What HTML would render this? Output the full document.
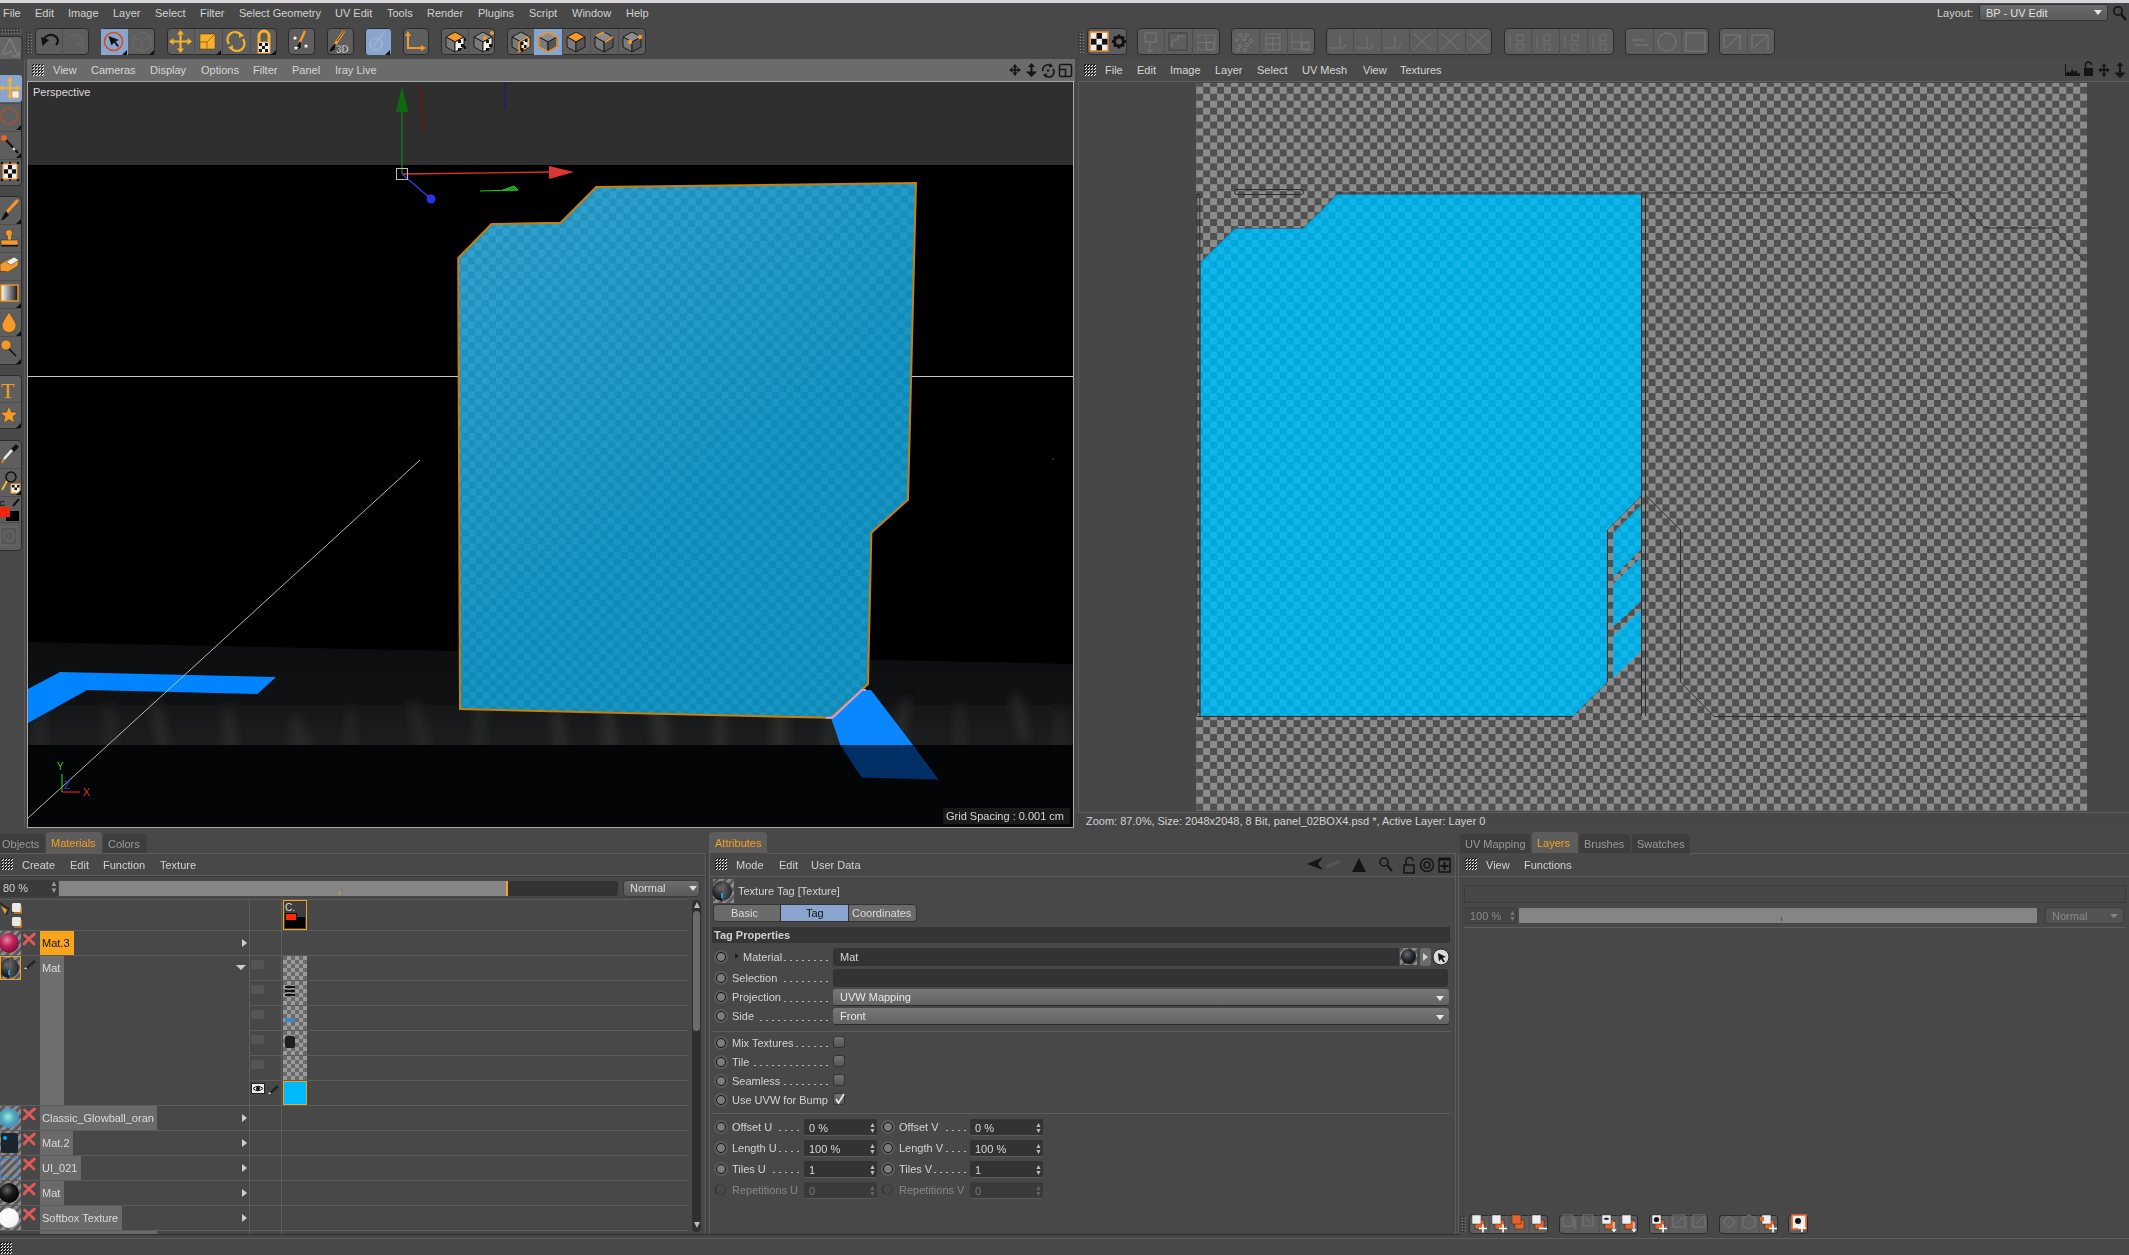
<!DOCTYPE html><html><head><meta charset="utf-8"><style>
*{margin:0;padding:0;box-sizing:border-box}
html,body{width:2129px;height:1255px;overflow:hidden;background:#484848;font-family:"Liberation Sans",sans-serif;font-size:11px;color:#cfcfcf}
.a{position:absolute}
.t{position:absolute;white-space:nowrap;line-height:12px}
.chk{background-color:#505050;background-image:linear-gradient(45deg,#8c8c8c 25%,transparent 25%,transparent 75%,#8c8c8c 75%),linear-gradient(45deg,#8c8c8c 25%,transparent 25%,transparent 75%,#8c8c8c 75%)}
.grp{position:absolute;border:1px solid #2c2c2c;border-radius:4px;background:#5e5e5e}
.grip{position:absolute;background-image:radial-gradient(#777 0.8px,transparent 1px);background-size:3px 3px}
.stripe{background:repeating-linear-gradient(-45deg,#fff 0 1.2px,#111 1.2px 2.8px)}
</style></head><body>
<svg width="0" height="0" style="position:absolute"><defs><pattern id="grippat" width="3" height="3" patternUnits="userSpaceOnUse"><rect x="0" y="1" width="1" height="1" fill="#000"/><rect x="1" y="0" width="1" height="1" fill="#000"/><rect x="1" y="2" width="1" height="1" fill="#fff"/><rect x="2" y="1" width="1" height="1" fill="#fff"/></pattern><pattern id="dotpat" width="3" height="3" patternUnits="userSpaceOnUse"><rect x="0" y="0" width="1" height="1" fill="#262626"/><rect x="2" y="2" width="1" height="1" fill="#8a8a8a"/></pattern></defs></svg>
<div class="a" style="left:0px;top:0px;width:2129px;height:3px;background:#d7d5d9"></div>
<div class="a" style="left:0px;top:3px;width:2129px;height:22px;background:#484848"></div>
<div class="t" style="left:3px;top:7px;color:#d2d2d2">File</div>
<div class="t" style="left:35px;top:7px;color:#d2d2d2">Edit</div>
<div class="t" style="left:68px;top:7px;color:#d2d2d2">Image</div>
<div class="t" style="left:113px;top:7px;color:#d2d2d2">Layer</div>
<div class="t" style="left:155px;top:7px;color:#d2d2d2">Select</div>
<div class="t" style="left:200px;top:7px;color:#d2d2d2">Filter</div>
<div class="t" style="left:239px;top:7px;color:#d2d2d2">Select Geometry</div>
<div class="t" style="left:335px;top:7px;color:#d2d2d2">UV Edit</div>
<div class="t" style="left:387px;top:7px;color:#d2d2d2">Tools</div>
<div class="t" style="left:427px;top:7px;color:#d2d2d2">Render</div>
<div class="t" style="left:478px;top:7px;color:#d2d2d2">Plugins</div>
<div class="t" style="left:529px;top:7px;color:#d2d2d2">Script</div>
<div class="t" style="left:572px;top:7px;color:#d2d2d2">Window</div>
<div class="t" style="left:626px;top:7px;color:#d2d2d2">Help</div>
<div class="a" style="left:0px;top:25px;width:2129px;height:34px;background:#484848"></div>
<svg class="a" style="left:26px;top:32px" width="6" height="22" shape-rendering="crispEdges"><rect width="6" height="22" fill="url(#dotpat)"/></svg>
<svg class="a" style="left:0px;top:28px" width="21" height="6" shape-rendering="crispEdges"><rect width="21" height="6" fill="url(#dotpat)"/></svg>
<div class="grp" style="left:35px;top:28px;width:54px;height:27px"></div>
<div class="grp" style="left:101px;top:28px;width:54px;height:27px"></div>
<div class="grp" style="left:167px;top:28px;width:110px;height:27px"></div>
<div class="grp" style="left:288px;top:28px;width:27px;height:27px"></div>
<div class="grp" style="left:327px;top:28px;width:27px;height:27px"></div>
<div class="grp" style="left:365px;top:28px;width:26px;height:27px"></div>
<div class="grp" style="left:403px;top:28px;width:26px;height:27px"></div>
<div class="grp" style="left:441px;top:28px;width:54px;height:27px"></div>
<div class="grp" style="left:507px;top:28px;width:139px;height:27px"></div>
<svg class="a" style="left:1078px;top:32px" width="6" height="22" shape-rendering="crispEdges"><rect width="6" height="22" fill="url(#dotpat)"/></svg>
<div class="grp" style="left:1087px;top:28px;width:40px;height:27px"></div>
<div class="grp" style="left:1137px;top:28px;width:83px;height:27px"></div>
<div class="grp" style="left:1231px;top:28px;width:84px;height:27px"></div>
<div class="grp" style="left:1326px;top:28px;width:166px;height:27px"></div>
<div class="grp" style="left:1504px;top:28px;width:110px;height:27px"></div>
<div class="grp" style="left:1625px;top:28px;width:84px;height:27px"></div>
<div class="grp" style="left:1719px;top:28px;width:56px;height:27px"></div>
<svg class="a" style="left:0;top:0" width="2129" height="60"><rect x="62" y="29" width="1" height="26" fill="#4e4e4e"/><rect x="194" y="29" width="1" height="26" fill="#4e4e4e"/><rect x="222" y="29" width="1" height="26" fill="#4e4e4e"/><rect x="250" y="29" width="1" height="26" fill="#4e4e4e"/><rect x="534" y="29" width="1" height="26" fill="#4e4e4e"/><rect x="562" y="29" width="1" height="26" fill="#4e4e4e"/><rect x="590" y="29" width="1" height="26" fill="#4e4e4e"/><rect x="618" y="29" width="1" height="26" fill="#4e4e4e"/><rect x="468" y="29" width="1" height="26" fill="#4e4e4e"/><rect x="101" y="29" width="27" height="26" fill="#8aa5cd"/><rect x="366" y="29" width="25" height="26" rx="3" fill="#8aa5cd"/><rect x="534" y="29" width="28" height="26" fill="#8aa5cd"/><path d="M42.5 46 L41 37 L49 40 Z" fill="#111"/><path d="M44 40 A7 6 0 1 1 56 45" fill="none" stroke="#111" stroke-width="2"/><path d="M66 40 A8 5 0 1 1 78 44 M75 44 L83 46 L82 38" fill="none" stroke="#6a6a6a" stroke-width="1"/><circle cx="113.5" cy="41.5" r="9" fill="none" stroke="#d2501e" stroke-width="1.6"/><path d="M108.5 36 L119 40 L115.5 41.5 L119 46 L117.5 47 L114 42.5 L111.5 45.5 Z" fill="#111"/><polygon points="127,55 122,55 127,50" fill="#111"/><path d="M133 37 L142 32 L151 36 L151 47 L142 52 L133 47 Z M133 37 L142 41 L151 36 M142 41 L142 52" fill="none" stroke="#6c6c6c" stroke-width="1"/><polygon points="154,55 149,55 154,50" fill="#111"/><path d="M180.5 32 V51 M171 41.5 H190" stroke="#f6b12a" stroke-width="2.2"/><path d="M180.5 30 L177 34.5 H184 Z M180.5 53 L177 48.5 H184 Z M169 41.5 L173.5 38 V45 Z M192 41.5 L187.5 38 V45 Z" fill="#f6b12a"/><rect x="200" y="34" width="15" height="15" fill="#f6b12a" stroke="#6b4a10" stroke-width="0.6"/><path d="M200 42 H207 V49 M207 42 L215 34" stroke="#8a5a10" stroke-width="0.8" fill="none"/><polygon points="221,55 216,55 221,50" fill="#111"/><path d="M229 44 A7 7 0 0 1 241 35 M243 39 A7 7 0 0 1 231 48" fill="none" stroke="#f6b12a" stroke-width="2.2"/><path d="M239 32 L244 35.5 L239 38 Z M233 51 L228 47.5 L233 45 Z" fill="#f6b12a"/><path d="M259 42 V36 A5 5 0 0 1 269 36 V42" fill="none" stroke="#f6b12a" stroke-width="3"/><rect x="258" y="42" width="12" height="11" fill="#eee" stroke="#f39a2b" stroke-width="1"/><rect x="259" y="43" width="3" height="3" fill="#111"/><rect x="265" y="43" width="3" height="3" fill="#111"/><rect x="262" y="46" width="3" height="3" fill="#111"/><rect x="259" y="49" width="3" height="3" fill="#111"/><rect x="265" y="49" width="3" height="3" fill="#111"/><polygon points="276,55 271,55 276,50" fill="#111"/><path d="M305 31 L299 44" stroke="#f39a2b" stroke-width="2.5"/><path d="M300 42 L297 49 L300 47 Z" fill="#111" stroke="#111" stroke-width="1.5"/><polygon points="295,35 296,37 298,37 296.5,38.7 297,41 295,39.5 293,41 293.5,38.7 292,37 294,37" fill="#eee" stroke="#333" stroke-width="0.5"/><polygon points="296,45 297,47 299,47 297.5,48.7 298,51 296,49.5 294,51 294.5,48.7 293,47 295,47" fill="#eee" stroke="#333" stroke-width="0.5"/><polygon points="306,43 307,45 309,45 307.5,46.7 308,49 306,47.5 304,49 304.5,46.7 303,45 305,45" fill="#eee" stroke="#333" stroke-width="0.5"/><path d="M344 31 L334 46" stroke="#f39a2b" stroke-width="3"/><path d="M335 44 L330 51 L334 49 Z" fill="#111" stroke="#111" stroke-width="1.5"/><path d="M344 31 L337 41" stroke="#222" stroke-width="0.8"/><text x="336" y="53" font-family="Liberation Sans" font-weight="bold" font-size="10" fill="#eee" stroke="#333" stroke-width="0.4">3D</text><circle cx="376" cy="44" r="6" fill="none" stroke="#a9bedc" stroke-width="1"/><path d="M373 47 L385 31" stroke="#a9bedc" stroke-width="1"/><polygon points="390,55 385,55 390,50" fill="#111"/><path d="M408 33 V48 H424" fill="none" stroke="#f39a2b" stroke-width="2"/><path d="M408 31 L405 36 H411 Z M426 48 L421 45 V51 Z" fill="#f39a2b"/><g stroke="#1a1a1a" stroke-width="1" stroke-linejoin="round"><polygon points="455,32 464,37 455,42 446,37" fill="#f39a2b"/><polygon points="446,37 455,42 455,52 446,47" fill="#7a7a7a"/><polygon points="455,42 464,37 464,47 455,52" fill="#eee"/></g><g fill="#111"><rect x="458" y="40" width="3" height="3"/><rect x="461" y="44" width="3" height="3"/><rect x="458" y="48" width="3" height="3"/><rect x="464" y="38" width="2" height="3"/><rect x="464" y="46" width="2" height="3"/></g><g stroke="#1a1a1a" stroke-width="1" stroke-linejoin="round"><polygon points="483,32 492,37 483,42 474,37" fill="#8c8c8c"/><polygon points="474,37 483,42 483,52 474,47" fill="#7a7a7a"/><polygon points="483,42 492,37 492,47 483,52" fill="#eee"/></g><g fill="#111"><rect x="486" y="40" width="3" height="3"/><rect x="489" y="44" width="3" height="3"/><rect x="486" y="48" width="3" height="3"/></g><circle cx="485" cy="38" r="2" fill="#f39a2b"/><circle cx="492" cy="33" r="2" fill="#f39a2b"/><g stroke="#1a1a1a" stroke-width="1" stroke-linejoin="round"><polygon points="521,32 530,37 521,42 512,37" fill="#8c8c8c"/><polygon points="512,37 521,42 521,52 512,47" fill="#7a7a7a"/><polygon points="521,42 530,37 530,47 521,52" fill="#eee"/></g><path d="M528 37 V47 L519 52 V42 Z" fill="none" stroke="#f39a2b" stroke-width="1.2"/><g fill="#111"><rect x="521" y="42" width="2.5" height="3"/><rect x="524" y="45" width="2.5" height="3"/><rect x="521" y="48" width="2.5" height="3"/><rect x="525" y="39" width="2.5" height="3"/></g><g stroke="#1a1a1a" stroke-width="1" stroke-linejoin="round"><polygon points="548,32 557,37 548,42 539,37" fill="#8c8c8c"/><polygon points="539,37 548,42 548,52 539,47" fill="#7a7a7a"/><polygon points="548,42 557,37 557,47 548,52" fill="#555"/></g><polygon points="548,32 557,37 557,47 548,52 539,47 539,37" fill="none" stroke="#f39a2b" stroke-width="1.5"/><g stroke="#1a1a1a" stroke-width="1" stroke-linejoin="round"><polygon points="576,32 585,37 576,42 567,37" fill="#f39a2b"/><polygon points="567,37 576,42 576,52 567,47" fill="#7a7a7a"/><polygon points="576,42 585,37 585,47 576,52" fill="#555"/></g><g stroke="#1a1a1a" stroke-width="1" stroke-linejoin="round"><polygon points="604,32 613,37 604,42 595,37" fill="#8c8c8c"/><polygon points="595,37 604,42 604,52 595,47" fill="#7a7a7a"/><polygon points="604,42 613,37 613,47 604,52" fill="#555"/></g><path d="M596 36 L604 32 M605 42 L613 37" stroke="#f39a2b" stroke-width="1.5"/><g stroke="#1a1a1a" stroke-width="1" stroke-linejoin="round"><polygon points="632,32 641,37 632,42 623,37" fill="#8c8c8c"/><polygon points="623,37 632,42 632,52 623,47" fill="#7a7a7a"/><polygon points="632,42 641,37 641,47 632,52" fill="#555"/></g><circle cx="630" cy="42" r="2.2" fill="#f39a2b"/><circle cx="640" cy="37" r="2.2" fill="#f39a2b"/><rect x="-4" y="36.5" width="26" height="27" rx="3" fill="#666" stroke="#2a2a2a"/><path d="M2 54 L10 38.5 L17 54 M3 55 L12 51 M12 56 H19 V52" fill="none" stroke="#8a8a8a" stroke-width="1"/><rect x="1090" y="32" width="18" height="19" fill="#eee" stroke="#e8882a" stroke-width="1.5"/><rect x="1096.5" y="33.0" width="5.5" height="5.8" fill="#111"/><rect x="1091.0" y="38.8" width="5.5" height="5.8" fill="#111"/><rect x="1102.0" y="38.8" width="5.5" height="5.8" fill="#111"/><rect x="1096.5" y="44.6" width="5.5" height="5.8" fill="#111"/><g transform="translate(1119,41.5)"><circle r="4.5" fill="none" stroke="#111" stroke-width="3"/><rect x="-1.3" y="-7" width="2.6" height="3" fill="#111" transform="rotate(0)"/><rect x="-1.3" y="-7" width="2.6" height="3" fill="#111" transform="rotate(45)"/><rect x="-1.3" y="-7" width="2.6" height="3" fill="#111" transform="rotate(90)"/><rect x="-1.3" y="-7" width="2.6" height="3" fill="#111" transform="rotate(135)"/><rect x="-1.3" y="-7" width="2.6" height="3" fill="#111" transform="rotate(180)"/><rect x="-1.3" y="-7" width="2.6" height="3" fill="#111" transform="rotate(225)"/><rect x="-1.3" y="-7" width="2.6" height="3" fill="#111" transform="rotate(270)"/><rect x="-1.3" y="-7" width="2.6" height="3" fill="#111" transform="rotate(315)"/></g><rect x="1164" y="29" width="1" height="26" fill="#4e4e4e"/><rect x="1192" y="29" width="1" height="26" fill="#4e4e4e"/><rect x="1259" y="29" width="1" height="26" fill="#4e4e4e"/><rect x="1287" y="29" width="1" height="26" fill="#4e4e4e"/><rect x="1353" y="29" width="1" height="26" fill="#4e4e4e"/><rect x="1381" y="29" width="1" height="26" fill="#4e4e4e"/><rect x="1409" y="29" width="1" height="26" fill="#4e4e4e"/><rect x="1437" y="29" width="1" height="26" fill="#4e4e4e"/><rect x="1465" y="29" width="1" height="26" fill="#4e4e4e"/><rect x="1531" y="29" width="1" height="26" fill="#4e4e4e"/><rect x="1559" y="29" width="1" height="26" fill="#4e4e4e"/><rect x="1587" y="29" width="1" height="26" fill="#4e4e4e"/><rect x="1653" y="29" width="1" height="26" fill="#4e4e4e"/><rect x="1681" y="29" width="1" height="26" fill="#4e4e4e"/><rect x="1747" y="29" width="1" height="26" fill="#4e4e4e"/><path d="M1145 33 L1156 33 L1156 42 L1145 42 Z" fill="none" stroke="#7a7a7a"/><path d="M1150 43 V52 M1147 49 L1150 52 L1153 49" stroke="#7a7a7a" fill="none"/><rect x="1169" y="33" width="18" height="17" fill="none" stroke="#4a4a4a" stroke-width="1.5"/><path d="M1172 47 V40 H1178 V36 H1184" fill="none" stroke="#7a7a7a"/><path d="M1198 35 H1215 V50 H1198 Z M1206 35 V50 M1198 42.5 H1215" fill="none" stroke="#7a7a7a" stroke-width="0.8"/><circle cx="1210" cy="46" r="4" fill="none" stroke="#7a7a7a"/><path d="M1330 48 H1340 V36 M1342 50 L1346 44" fill="none" stroke="#7a7a7a" stroke-width="0.9"/><path d="M1357 48 H1367 V36 M1369 50 L1373 44" fill="none" stroke="#7a7a7a" stroke-width="0.9"/><path d="M1385 48 H1395 V36 M1397 50 L1401 44" fill="none" stroke="#7a7a7a" stroke-width="0.9"/><path d="M1413 50 L1431 33 M1413 33 L1431 50" fill="none" stroke="#7a7a7a" stroke-width="1"/><path d="M1441 50 L1459 33 M1441 33 L1459 50" fill="none" stroke="#7a7a7a" stroke-width="1"/><path d="M1469 50 L1487 33 M1469 33 L1487 50" fill="none" stroke="#7a7a7a" stroke-width="1"/><path d="M1510 36 V48 M1517 35 H1523 V41 H1517 Z M1517 44 H1523 V50 H1517 Z" fill="none" stroke="#7a7a7a" stroke-width="0.8"/><path d="M1537 36 V48 M1544 35 H1550 V41 H1544 Z M1544 44 H1550 V50 H1544 Z" fill="none" stroke="#7a7a7a" stroke-width="0.8"/><path d="M1565 36 V48 M1572 35 H1578 V41 H1572 Z M1572 44 H1578 V50 H1572 Z" fill="none" stroke="#7a7a7a" stroke-width="0.8"/><path d="M1593 36 V48 M1600 35 H1606 V41 H1600 Z M1600 44 H1606 V50 H1600 Z" fill="none" stroke="#7a7a7a" stroke-width="0.8"/><path d="M1632 40 H1645 M1635 45 H1648" stroke="#7a7a7a"/><circle cx="1667" cy="42" r="9" fill="none" stroke="#7a7a7a"/><rect x="1686" y="33" width="19" height="18" fill="none" stroke="#7a7a7a"/><path d="M1724 35 H1740 V50 M1724 35 V49 M1726 48 L1740 35" fill="none" stroke="#7a7a7a"/><path d="M1752 35 H1768 V50 M1752 35 V49 M1754 48 L1768 35" fill="none" stroke="#7a7a7a"/><g fill="none" stroke="#7a7a7a" stroke-width="0.9"><circle cx="1240" cy="35" r="1.6"/><circle cx="1247" cy="35" r="1.6"/><circle cx="1237" cy="40" r="1.6"/><circle cx="1244" cy="39" r="1.6"/><circle cx="1251" cy="41" r="1.6"/><circle cx="1240" cy="46" r="1.6"/><circle cx="1247" cy="45" r="1.6"/><circle cx="1238" cy="50" r="1.6"/><circle cx="1245" cy="50" r="1.6"/></g><path d="M1266 34 H1280 V50 H1266 Z M1266 38 H1280 M1273 38 V50 M1266 44 H1280" fill="none" stroke="#7a7a7a" stroke-width="0.9"/><path d="M1292 33 V49 H1310 M1301 33 V49 M1292 42 H1310" fill="none" stroke="#7a7a7a" stroke-width="0.8"/><rect x="1302" y="43" width="7" height="7" fill="none" stroke="#7a7a7a"/><path d="M2094 11 L2102 11 L2098 15 Z" fill="#ddd"/></svg>
<div class="t" style="left:1937px;top:7px;color:#d2d2d2">Layout:</div>
<div class="a" style="left:1979px;top:4px;width:129px;height:17px;background:linear-gradient(#6a6a6a,#5a5a5a);border:1px solid #333;border-radius:3px"></div>
<div class="t" style="left:1986px;top:7px;color:#e0e0e0">BP - UV Edit</div>
<div class="a" style="left:2094px;top:10px;width:0;height:0;border-left:4px solid transparent;border-right:4px solid transparent;border-top:5px solid #e8e8e8"></div>
<svg class="a" style="left:2110px;top:4px" width="19" height="20"><circle cx="8" cy="7" r="4.2" fill="none" stroke="#111" stroke-width="1.6"/><path d="M11 10 L16 16" stroke="#111" stroke-width="2.2"/></svg>
<div class="a" style="left:0px;top:59px;width:26px;height:1196px;background:#484848"></div>
<div class="a" style="left:24px;top:59px;width:1px;height:780px;background:#5a5a5a"></div>
<div class="grp" style="left:-4px;top:75px;width:26px;height:111px"></div>
<div class="grp" style="left:-4px;top:196px;width:26px;height:169px"></div>
<div class="grp" style="left:-4px;top:375px;width:26px;height:54px"></div>
<div class="grp" style="left:-4px;top:440px;width:26px;height:111px"></div>
<div class="a" style="left:0px;top:75px;width:22px;height:27px;background:#8aa5cd;border-radius:0 3px 3px 0"></div>
<svg class="a" style="left:0;top:0" width="27" height="600"><rect x="0" y="103" width="21" height="1" fill="#4e4e4e"/><rect x="0" y="131" width="21" height="1" fill="#4e4e4e"/><rect x="0" y="159" width="21" height="1" fill="#4e4e4e"/><rect x="0" y="224" width="21" height="1" fill="#4e4e4e"/><rect x="0" y="252" width="21" height="1" fill="#4e4e4e"/><rect x="0" y="280" width="21" height="1" fill="#4e4e4e"/><rect x="0" y="308" width="21" height="1" fill="#4e4e4e"/><rect x="0" y="336" width="21" height="1" fill="#4e4e4e"/><rect x="0" y="402" width="21" height="1" fill="#4e4e4e"/><rect x="0" y="468" width="21" height="1" fill="#4e4e4e"/><rect x="0" y="496" width="21" height="1" fill="#4e4e4e"/><rect x="0" y="522" width="21" height="1" fill="#4e4e4e"/><path d="M10 79 V97 M1 88 H19" stroke="#f6b12a" stroke-width="2.2"/><path d="M10 77 L7 81 H13 Z M10 99 L7 95 H13 Z M-1 88 L3 85 V91 Z M21 88 L17 85 V91 Z" fill="#f6b12a"/><rect x="12" y="91" width="7" height="7" rx="1" fill="#eee" stroke="#f39a2b" stroke-width="0.8"/><circle cx="9" cy="116" r="8" fill="none" stroke="#c8501e" stroke-width="1.6" stroke-dasharray="2.2 1.4"/><polygon points="21,130 16,130 21,125" fill="#111"/><path d="M6 140 L18 153" stroke="#111" stroke-width="2.2"/><path d="M13 148 L15 150" stroke="#eee" stroke-width="2"/><circle cx="4" cy="138" r="3" fill="#e8602a"/><polygon points="21,158 16,158 21,153" fill="#111"/><rect x="3" y="164" width="14" height="15" fill="#eee" stroke="#f39a2b" stroke-width="1.2"/><rect x="8" y="165.0" width="4" height="4.3" fill="#111"/><rect x="4" y="169.3" width="4" height="4.3" fill="#111"/><rect x="12" y="169.3" width="4" height="4.3" fill="#111"/><rect x="8" y="173.6" width="4" height="4.3" fill="#111"/><g fill="#111"><circle cx="2" cy="163" r="1.3"/><circle cx="18" cy="163" r="1.3"/><circle cx="2" cy="180" r="1.3"/><circle cx="18" cy="180" r="1.3"/><circle cx="10" cy="163" r="1.1"/><circle cx="10" cy="180" r="1.1"/></g><path d="M17 201 L6 213" stroke="#f39a2b" stroke-width="3.2" stroke-linecap="round"/><path d="M6 212 L2 220 L8 215 Z" fill="#111" stroke="#111" stroke-width="1.5"/><polygon points="21,224 16,224 21,219" fill="#111"/><circle cx="9" cy="233" r="3.5" fill="#f39a2b" stroke="#222" stroke-width="0.5"/><rect x="8" y="235" width="3" height="5" fill="#f39a2b"/><rect x="1" y="240" width="17" height="5" fill="#f39a2b" stroke="#222" stroke-width="0.5"/><rect x="1" y="245" width="17" height="1.5" fill="#111"/><path d="M0 264 L10 258 L19 260 L18 266 L8 272 L0 271 Z" fill="#f39a2b" stroke="#333" stroke-width="0.6"/><path d="M6 262 L14 257 L19 260 L11 265 Z" fill="#eee" stroke="#333" stroke-width="0.5"/><defs><linearGradient id="lg1"><stop offset="0" stop-color="#fff"/><stop offset="1" stop-color="#111"/></linearGradient></defs><rect x="1" y="285" width="17" height="16" fill="url(#lg1)" stroke="#f39a2b" stroke-width="1.4"/><polygon points="21,308 16,308 21,303" fill="#111"/><path d="M9 312 C5 319 2 322 2 326 A7 6.5 0 0 0 16 326 C16 322 13 319 9 312 Z" fill="#f39a2b" stroke="#333" stroke-width="0.5"/><polygon points="21,336 16,336 21,331" fill="#111"/><circle cx="6" cy="345" r="5" fill="#f39a2b" stroke="#333" stroke-width="0.5"/><path d="M9 349 L16 356" stroke="#111" stroke-width="1.6"/><polygon points="21,364 16,364 21,359" fill="#111"/><text x="1" y="398" font-family="Liberation Serif" font-size="22" fill="#f39a2b">T</text><polygon points="9,406 11.5,412 18,412.5 13,416.5 14.5,423 9,419.5 3.5,423 5,416.5 0,412.5 6.5,412" fill="#f39a2b" stroke="#333" stroke-width="0.5"/><polygon points="21,428 16,428 21,423" fill="#111"/><path d="M16 444 L19 447 L14 452 L11 449 Z" fill="#111"/><path d="M12 450 L4 459" stroke="#eee" stroke-width="2.5"/><path d="M4 459 L2 463" stroke="#f39a2b" stroke-width="1.6"/><circle cx="11" cy="477" r="5" fill="none" stroke="#111" stroke-width="1.5"/><path d="M7 481 L2 490" stroke="#f6c02a" stroke-width="1.8"/><rect x="11" y="484" width="9" height="9" fill="#eee" stroke="#f39a2b" stroke-width="1"/><rect x="12" y="485" width="2.5" height="2.5" fill="#111"/><rect x="17" y="485" width="2.5" height="2.5" fill="#111"/><rect x="14.5" y="487.5" width="2.5" height="2.5" fill="#111"/><polygon points="21,495 16,495 21,490" fill="#111"/><text x="-1" y="506" font-family="Liberation Sans" font-weight="bold" font-size="8" fill="#111">C</text><path d="M13 506 L19 499" stroke="#111" stroke-width="2"/><rect x="6" y="511" width="13" height="10" fill="#000"/><rect x="-1" y="507" width="11" height="10" fill="#f2250a"/><rect x="1" y="527" width="16" height="18" fill="#555" stroke="#6a6a6a"/><circle cx="9" cy="536" r="5.5" fill="#5a5a5a" stroke="#777" stroke-width="0.8"/></svg>
<div class="a" style="left:27px;top:59px;width:1048px;height:23px;background:#6b6b6b"></div>
<svg class="a" style="left:32px;top:64px" width="12" height="12" shape-rendering="crispEdges"><rect width="12" height="12" fill="url(#grippat)"/></svg>
<div class="t" style="left:53px;top:64px;color:#d6d6d6">View</div>
<div class="t" style="left:91px;top:64px;color:#d6d6d6">Cameras</div>
<div class="t" style="left:150px;top:64px;color:#d6d6d6">Display</div>
<div class="t" style="left:201px;top:64px;color:#d6d6d6">Options</div>
<div class="t" style="left:253px;top:64px;color:#d6d6d6">Filter</div>
<div class="t" style="left:292px;top:64px;color:#d6d6d6">Panel</div>
<div class="t" style="left:335px;top:64px;color:#d6d6d6">Iray Live</div>
<div class="a" style="left:27px;top:81px;width:1047px;height:747px;background:#000;border:1px solid #a9a9a9"></div>
<div class="a" style="left:28px;top:82px;width:1045px;height:83px;background:#2f2f2f"></div>
<div class="t" style="left:33px;top:86px;color:#dcdcdc">Perspective</div>
<svg class="a" style="left:0;top:0" width="2129" height="1255">
<defs>
<linearGradient id="vbase" gradientUnits="userSpaceOnUse" x1="460" y1="180" x2="700" y2="520">
<stop offset="0" stop-color="#38a2cf"/><stop offset="1" stop-color="#1795c3"/>
</linearGradient>
<linearGradient id="floor" x1="0" y1="0" x2="0" y2="1">
<stop offset="0" stop-color="#0c0d0e"/><stop offset="0.5" stop-color="#101112"/><stop offset="1" stop-color="#1a1b1c"/>
</linearGradient>
<filter id="blur4" x="-50%" y="-50%" width="200%" height="200%"><feGaussianBlur stdDeviation="5"/></filter>
<clipPath id="vpclip"><rect x="28" y="82" width="1045" height="745"/></clipPath>
<clipPath id="floorclip"><polygon points="28,642 1073,664 1073,745 28,745"/></clipPath>
</defs>
<g clip-path="url(#vpclip)">
<polygon points="28,642 1073,664 1073,745 28,745" fill="url(#floor)"/>
<rect x="28" y="745" width="1045" height="82" fill="#040506"/>
<g clip-path="url(#floorclip)" filter="url(#blur4)">
<rect x="28" y="705" width="1045" height="45" fill="#2a2b2c" fill-opacity="0.2"/>
<ellipse cx="40" cy="735" rx="7" ry="28" fill="#454543" fill-opacity="0.22" transform="rotate(1 40 735)"/><ellipse cx="110" cy="730" rx="7" ry="26" fill="#454543" fill-opacity="0.21" transform="rotate(-2 110 730)"/><ellipse cx="160" cy="728" rx="5" ry="27" fill="#454543" fill-opacity="0.40" transform="rotate(-11 160 728)"/><ellipse cx="230" cy="743" rx="6" ry="38" fill="#454543" fill-opacity="0.34" transform="rotate(-3 230 743)"/><ellipse cx="300" cy="741" rx="10" ry="26" fill="#454543" fill-opacity="0.27" transform="rotate(-11 300 741)"/><ellipse cx="350" cy="739" rx="6" ry="31" fill="#454543" fill-opacity="0.24" transform="rotate(2 350 739)"/><ellipse cx="420" cy="731" rx="8" ry="32" fill="#454543" fill-opacity="0.22" transform="rotate(-13 420 731)"/><ellipse cx="480" cy="728" rx="6" ry="39" fill="#454543" fill-opacity="0.28" transform="rotate(3 480 728)"/><ellipse cx="560" cy="739" rx="7" ry="31" fill="#454543" fill-opacity="0.37" transform="rotate(-8 560 739)"/><ellipse cx="610" cy="741" rx="8" ry="36" fill="#454543" fill-opacity="0.38" transform="rotate(-6 610 741)"/><ellipse cx="660" cy="728" rx="10" ry="27" fill="#454543" fill-opacity="0.38" transform="rotate(-10 660 728)"/><ellipse cx="720" cy="735" rx="7" ry="26" fill="#454543" fill-opacity="0.38" transform="rotate(2 720 735)"/><ellipse cx="780" cy="736" rx="9" ry="31" fill="#454543" fill-opacity="0.34" transform="rotate(2 780 736)"/><ellipse cx="830" cy="743" rx="7" ry="42" fill="#454543" fill-opacity="0.31" transform="rotate(5 830 743)"/><ellipse cx="900" cy="734" rx="5" ry="39" fill="#454543" fill-opacity="0.44" transform="rotate(10 900 734)"/><ellipse cx="960" cy="735" rx="6" ry="33" fill="#454543" fill-opacity="0.21" transform="rotate(-1 960 735)"/><ellipse cx="1020" cy="717" rx="6" ry="27" fill="#454543" fill-opacity="0.38" transform="rotate(-11 1020 717)"/><ellipse cx="1060" cy="741" rx="6" ry="33" fill="#454543" fill-opacity="0.22" transform="rotate(-2 1060 741)"/></g>
<rect x="28" y="376" width="1045" height="1" fill="#c8c8c8"/>
<polygon points="28,689 60,672 276,677 257.5,694 87,690 28,723" fill="#0084ff"/>
<line x1="28" y1="818" x2="420" y2="460" stroke="#c4d0c4" stroke-width="0.9"/>
<polygon points="831,717.8 862,690 871,690 913,745 840.3,745" fill="#0a86ff"/>
<polygon points="840.3,745 913,745 938.5,779.5 861.6,777.5" fill="#012f66"/>
<polygon points="458.2,258 491.5,224 560.6,222.8 596.2,187 916,183 908,499.8 871.4,532.7 868,684 831,717.8 460,709" fill="url(#vbase)"/>
</g>
</svg>
<div class="a" style="left:0;top:0;width:1100px;height:840px;clip-path:polygon(458.2px 258px ,491.5px 224px ,560.6px 222.8px ,596.2px 187px ,916px 183px ,908px 499.8px ,871.4px 532.7px ,868px 684px ,831px 717.8px ,460px 709px);mix-blend-mode:multiply">
<div class="a" style="left:1190.0px;top:180.0px;width:470px;height:560px;transform-origin:0 0;transform:matrix3d(1.05731328,-0.0125554553,0,-6.85656056e-05,-0.047884099,1.03238301,0,7.20352913e-05,0,0,1,0,-742.791615,-5.32186669,0,1)">
<svg width="470" height="560" style="display:block"><defs><pattern id="vchk2" width="13.92" height="13.92" patternUnits="userSpaceOnUse" x="6.200" y="-100.160">
<rect width="6.96" height="6.96" fill="rgb(170,235,240)"/><rect x="6.96" y="6.96" width="6.96" height="6.96" fill="rgb(170,235,240)"/></pattern></defs>
<rect width="470" height="560" fill="url(#vchk2)"/></svg>
</div></div>
<svg class="a" style="left:0;top:0" width="1100" height="840">
<polygon points="458.2,258 491.5,224 560.6,222.8 596.2,187 916,183 908,499.8 871.4,532.7 868,684 831,717.8 460,709" fill="none" stroke="#c97f0c" stroke-width="2" stroke-linejoin="miter"/>
<polyline points="826,717.8 832.5,717.8 862,690 866,690" fill="none" stroke="#c9a0dc" stroke-width="2"/>
<line x1="402" y1="174" x2="402" y2="110" stroke="#108010" stroke-width="1.3"/>
<polygon points="396,112 402,86 408,112" fill="#0e6a0e"/>
<line x1="402" y1="174" x2="550" y2="172" stroke="#e03030" stroke-width="1.3"/>
<polygon points="549,166 574,172 549,179" fill="#e03434"/>
<line x1="402" y1="174" x2="431" y2="199" stroke="#3a3ae0" stroke-width="1.3"/>
<circle cx="431" cy="199" r="4.5" fill="#3030e8"/>
<rect x="396.5" y="168.5" width="11" height="11" fill="none" stroke="#bbbbbb" stroke-width="1"/>
<line x1="480" y1="191" x2="518" y2="190" stroke="#20c020" stroke-width="1.2"/>
<polygon points="503,190 514,186 518,190" fill="#1a9a1a" stroke="#20c020" stroke-width="1"/>
<polyline points="417,86 421,94 423,133" fill="none" stroke="#7a1010" stroke-width="1.2"/>
<line x1="505" y1="83" x2="505" y2="109" stroke="#1c1c80" stroke-width="1.2"/>
<line x1="62" y1="774" x2="62" y2="792" stroke="#20c020" stroke-width="1.2"/>
<line x1="62" y1="792" x2="80" y2="792" stroke="#e02020" stroke-width="1.2"/>
<text x="57" y="770" font-family="Liberation Sans" font-size="10" fill="#30d030">Y</text>
<text x="64" y="789" font-family="Liberation Sans" font-size="10" fill="#3838e8">Z</text>
<text x="83" y="796" font-family="Liberation Sans" font-size="11" fill="#e03030">X</text>
<circle cx="1053" cy="459" r="1" fill="#333"/>
<rect x="943" y="808" width="127" height="16" rx="2" fill="#1a1a1a"/>
<text x="946" y="820" font-family="Liberation Sans" font-size="11" fill="#d8d8d8">Grid Spacing : 0.001 cm</text>
</svg>
<div class="a" style="left:1078px;top:59px;width:1051px;height:23px;background:#4a4a4a;border-bottom:1px solid #5e5e5e"></div>
<svg class="a" style="left:1084px;top:64px" width="12" height="12" shape-rendering="crispEdges"><rect width="12" height="12" fill="url(#grippat)"/></svg>
<div class="t" style="left:1105px;top:64px;color:#d6d6d6">File</div>
<div class="t" style="left:1137px;top:64px;color:#d6d6d6">Edit</div>
<div class="t" style="left:1170px;top:64px;color:#d6d6d6">Image</div>
<div class="t" style="left:1215px;top:64px;color:#d6d6d6">Layer</div>
<div class="t" style="left:1257px;top:64px;color:#d6d6d6">Select</div>
<div class="t" style="left:1302px;top:64px;color:#d6d6d6">UV Mesh</div>
<div class="t" style="left:1363px;top:64px;color:#d6d6d6">View</div>
<div class="t" style="left:1400px;top:64px;color:#d6d6d6">Textures</div>
<div class="a" style="left:1078px;top:82px;width:1051px;height:731px;background:#474747;border-left:1px solid #5a5a5a"></div>
<svg class="a" style="left:0;top:0" width="2129" height="1255" shape-rendering="crispEdges">
<defs>
<pattern id="bchk" width="13.92" height="13.92" patternUnits="userSpaceOnUse" x="1196.2" y="79.84">
<rect width="13.92" height="13.92" fill="#12b5e9"/><rect width="6.96" height="6.96" fill="#00a9dd"/><rect x="6.96" y="6.96" width="6.96" height="6.96" fill="#00a9dd"/>
</pattern>
<pattern id="gchk" width="13.92" height="13.92" patternUnits="userSpaceOnUse" x="1196.2" y="79.84">
<rect width="13.92" height="13.92" fill="#8c8c8c"/><rect width="6.96" height="6.96" fill="#505050"/><rect x="6.96" y="6.96" width="6.96" height="6.96" fill="#505050"/>
</pattern>
</defs>
<rect x="1196.2" y="83" width="890.5" height="728" fill="url(#gchk)"/>
<g shape-rendering="geometricPrecision">
<polygon points="1200.5,262 1235,228.5 1303,228.5 1337,194.5 1641.6,194.5 1641.6,495.3 1607.5,529.7 1607.5,682 1573,716.3 1200.5,716.3" fill="url(#bchk)" stroke="#1e6f90" stroke-width="0.8"/>
<polygon points="1613,533 1641.6,504.5 1641.6,549 1613,577.5" fill="url(#bchk)"/>
<polygon points="1613,584 1641.6,557 1641.6,601 1613,627" fill="url(#bchk)"/>
<polygon points="1613,636 1641.6,608.5 1641.6,651 1613,678" fill="url(#bchk)"/>
<g fill="none" stroke="#2e2e2e" stroke-width="1">
<polyline points="1337,193 1950,193 1985,228 2053,228 2086,262"/>
<rect x="1234.5" y="189.5" width="69" height="5" rx="2.5"/>
<line x1="1196.8" y1="194" x2="1196.8" y2="716"/>
<line x1="1199.8" y1="194" x2="1199.8" y2="716"/>
<line x1="1196.8" y1="194.5" x2="1200" y2="194.5"/>
<line x1="1641.5" y1="193" x2="1641.5" y2="716"/>
<line x1="1645.5" y1="193" x2="1645.5" y2="716"/>
<polyline points="1645.5,495 1680.5,530 1680.5,682 1714,716.5 2086,716.5"/>
<line x1="1197" y1="716.5" x2="1573" y2="716.5"/>
<line x1="1607.5" y1="530" x2="1607.5" y2="682"/>
<line x1="1642" y1="530" x2="1646" y2="530"/>
<line x1="1642" y1="682" x2="1646" y2="682"/>
</g>
</g>
</svg>

<div class="a" style="left:1078px;top:812px;width:1051px;height:17px;background:#474747;border-top:1px solid #5e5e5e;border-bottom:1px solid #333"></div>
<div class="t" style="left:1086px;top:815px;color:#d4d4d4">Zoom: 87.0%, Size: 2048x2048, 8 Bit, panel_02BOX4.psd *, Active Layer: Layer 0</div>
<svg class="a" style="left:1000px;top:59px" width="1129" height="23">
<g fill="#151515">
<path d="M15 5 L12.5 8.5 H17.5 Z M15 17 L12.5 13.5 H17.5 Z M9 11 L12.5 8.5 V13.5 Z M21 11 L17.5 8.5 V13.5 Z"/>
<rect x="14.2" y="8" width="1.6" height="6"/><rect x="12" y="10.2" width="6" height="1.6"/>
<path d="M31.5 4 L28 8 H35 Z M31.5 18 L26 12.5 H37 Z"/><rect x="30.5" y="7" width="2" height="7"/>
</g>
<path d="M43 12 A5 5 0 0 1 51 7 M53 10 A5 5 0 0 1 45 16" fill="none" stroke="#151515" stroke-width="1.6"/>
<path d="M50 4 L53 7.5 L49 8.5 Z M46 19 L43 15.5 L47 14.5 Z" fill="#151515"/><circle cx="48" cy="11.5" r="1.2" fill="#151515"/>
<rect x="59.5" y="5.5" width="12" height="12" rx="1.5" fill="none" stroke="#151515" stroke-width="1.5"/><path d="M59.5 10.5 H65.5 V17.5" fill="none" stroke="#151515" stroke-width="1.5"/>
<g transform="translate(1064,0)" fill="#151515">
<path d="M1 17 V5 H2 V15 L4 12 L6 14 L8 10 L10 13 L12 11 L14 15 L16 14 V17 Z"/>
<rect x="20" y="9" width="9" height="8"/><path d="M21.5 9 V6 A3 3 0 0 1 27.5 6" fill="none" stroke="#151515" stroke-width="1.4"/>
<path d="M40 4 L37.5 7.5 H42.5 Z M40 18 L37.5 14.5 H42.5 Z M34 11 L37.5 8.5 V13.5 Z M46 11 L42.5 8.5 V13.5 Z"/><rect x="39.2" y="7" width="1.6" height="8"/><rect x="37" y="10.2" width="6" height="1.6"/>
<path d="M56 3 L52.5 7 H59.5 Z M56 19 L50.5 13.5 H61.5 Z"/><rect x="55" y="6" width="2" height="8"/>
</g>
</svg>

<div class="a" style="left:0px;top:828px;width:2129px;height:427px;background:#484848"></div>
<div class="a" style="left:0px;top:834px;width:45px;height:19px;background:#3d3d3d;border-radius:0 4px 0 0"></div>
<div class="t" style="left:2px;top:838px;color:#9a9a9a">Objects</div>
<div class="a" style="left:46px;top:832px;width:56px;height:21px;background:#5c5c5c;border-radius:4px 4px 0 0"></div>
<div class="t" style="left:51px;top:837px;color:#f8a21c">Materials</div>
<div class="a" style="left:103px;top:834px;width:44px;height:19px;background:#3d3d3d;border-radius:4px 4px 0 0"></div>
<div class="t" style="left:108px;top:838px;color:#9a9a9a">Colors</div>
<div class="a" style="left:0px;top:853px;width:706px;height:1px;background:#5d5d5d"></div>
<svg class="a" style="left:1px;top:858px" width="12" height="12" shape-rendering="crispEdges"><rect width="12" height="12" fill="url(#grippat)"/></svg>
<div class="t" style="left:22px;top:859px;color:#d2d2d2">Create</div>
<div class="t" style="left:70px;top:859px;color:#d2d2d2">Edit</div>
<div class="t" style="left:103px;top:859px;color:#d2d2d2">Function</div>
<div class="t" style="left:160px;top:859px;color:#d2d2d2">Texture</div>
<div class="a" style="left:0px;top:875px;width:706px;height:1px;background:#5d5d5d"></div>
<div class="a" style="left:0px;top:876px;width:706px;height:1px;background:#3a3a3a"></div>
<div class="a" style="left:0px;top:880px;width:58px;height:17px;background:#3b3b3b;border-radius:2px"></div>
<div class="t" style="left:3px;top:882px;color:#d0d0d0">80 %</div>
<div class="t" style="left:50px;top:880px;font-size:8px;color:#999;line-height:7px">&#9650;<br>&#9660;</div>
<div class="a" style="left:59px;top:881px;width:559px;height:15px;background:#333;border-radius:2px"></div>
<div class="a" style="left:59px;top:881px;width:448px;height:15px;background:#858585"></div>
<div class="a" style="left:506px;top:881px;width:2px;height:15px;background:#f5a21c"></div>
<div class="a" style="left:339px;top:891px;width:1px;height:4px;background:#e09a30"></div>
<div class="a" style="left:623px;top:880px;width:77px;height:17px;background:linear-gradient(#6c6c6c,#5a5a5a);border:1px solid #3a3a3a;border-radius:4px"></div>
<div class="t" style="left:630px;top:882px;color:#dcdcdc">Normal</div>
<div class="a" style="left:689px;top:886px;width:0;height:0;border-left:4px solid transparent;border-right:4px solid transparent;border-top:5px solid #ddd"></div>
<div class="a" style="left:0px;top:899px;width:688px;height:1px;background:#5d5d5d"></div>
<div class="a" style="left:0px;top:930px;width:688px;height:1px;background:#5d5d5d"></div>
<div class="a" style="left:0px;top:955px;width:688px;height:1px;background:#5d5d5d"></div>
<div class="a" style="left:250px;top:980px;width:438px;height:1px;background:#5d5d5d"></div>
<div class="a" style="left:250px;top:1005px;width:438px;height:1px;background:#5d5d5d"></div>
<div class="a" style="left:250px;top:1030px;width:438px;height:1px;background:#5d5d5d"></div>
<div class="a" style="left:250px;top:1055px;width:438px;height:1px;background:#5d5d5d"></div>
<div class="a" style="left:250px;top:1080px;width:438px;height:1px;background:#5d5d5d"></div>
<div class="a" style="left:0px;top:1105px;width:688px;height:1px;background:#5d5d5d"></div>
<div class="a" style="left:0px;top:1130px;width:688px;height:1px;background:#5d5d5d"></div>
<div class="a" style="left:0px;top:1155px;width:688px;height:1px;background:#5d5d5d"></div>
<div class="a" style="left:0px;top:1180px;width:688px;height:1px;background:#5d5d5d"></div>
<div class="a" style="left:0px;top:1205px;width:688px;height:1px;background:#5d5d5d"></div>
<div class="a" style="left:0px;top:1230px;width:688px;height:1px;background:#5d5d5d"></div>
<div class="a" style="left:249px;top:899px;width:1px;height:335px;background:#5d5d5d"></div>
<div class="a" style="left:281px;top:899px;width:1px;height:335px;background:#5d5d5d"></div>
<svg class="a" style="left:0;top:900px" width="40" height="30">
<path d="M1 6 L7 10 L5 14 Z" fill="#f59a24"/><path d="M0 3 L9 9 L6 15" fill="none" stroke="#222" stroke-width="1.2"/>
<rect x="12" y="3" width="9" height="9" rx="1.5" fill="#e8e8e8"/><path d="M21 6 V13 H14" fill="none" stroke="#f59a24" stroke-width="1.2"/>
<rect x="12" y="17" width="9" height="9" rx="1.5" fill="#e8e8e8"/><path d="M21 20 V27 H14" fill="none" stroke="#f59a24" stroke-width="1.2"/>
</svg>
<div class="a" style="left:283px;top:900px;width:24px;height:30px;background:#3e3e3e;border:1.5px solid #f5a21c"></div>
<div class="t" style="left:285px;top:902px;color:#ddd;font-size:10px">C.</div>
<div class="a" style="left:285px;top:913px;width:12px;height:8px;background:#ff2a0a;border:1px solid #111"></div>
<div class="a" style="left:297px;top:917px;width:8px;height:11px;background:#000"></div>
<div class="a" style="left:285px;top:921px;width:12px;height:7px;background:#000"></div>
<div class="a" style="left:0px;top:931px;width:21px;height:24px;background:repeating-linear-gradient(-45deg,#8a8a8a 0 3px,#5a5a5a 3px 6px)"></div>
<div class="a" style="left:-1px;top:933px;width:20px;height:20px;border-radius:50%;background:radial-gradient(circle at 40% 35%,#e887a8 0,#c0245a 35%,#6a0a2c 85%)"></div>
<svg class="a" style="left:22px;top:932px" width="15" height="14"><path d="M2.5 3 Q6 6 12 12 M12.5 2 Q7 6 2 12" stroke="#e25a58" stroke-width="2.8" fill="none" stroke-linecap="round"/></svg>
<div class="a" style="left:40px;top:931px;width:34px;height:24px;background:#f9a51c"></div>
<div class="t" style="left:42px;top:937px;color:#111">Mat.3</div>
<div class="a" style="left:242px;top:939px;width:0;height:0;border-top:4px solid transparent;border-bottom:4px solid transparent;border-left:5px solid #cfcfcf"></div>
<div class="a" style="left:0px;top:956px;width:21px;height:24px;background:repeating-linear-gradient(-45deg,#8a8a8a 0 3px,#5a5a5a 3px 6px)"></div>
<div class="a" style="left:-1px;top:958px;width:20px;height:20px;border-radius:50%;background:radial-gradient(circle at 40% 35%,#6a6a6a 0,#2a2f35 40%,#06080a 85%)"></div>
<div class="a" style="left:9px;top:958px;width:10px;height:20px;border-radius:0 10px 10px 0;background:linear-gradient(90deg,rgba(120,120,120,0.55),rgba(60,60,60,0.5))"></div>
<div class="a" style="left:8px;top:970px;width:1.5px;height:5px;background:#1a9ad8"></div>
<div class="a" style="left:0px;top:956px;width:21px;height:24px;border:1.5px solid #f5a21c"></div>
<svg class="a" style="left:22px;top:957px" width="16" height="14"><path d="M3 11 L12 3 L14 5 L5 12 Z" fill="#222"/><path d="M2 12 L4 10 L5 12 Z" fill="#ddd"/></svg>
<div class="a" style="left:40px;top:956px;width:24px;height:149px;background:#6e6e6e"></div>
<div class="t" style="left:42px;top:962px;color:#dcdcdc">Mat</div>
<div class="a" style="left:236px;top:965px;width:0;height:0;border-left:5px solid transparent;border-right:5px solid transparent;border-top:5px solid #cfcfcf"></div>
<div class="a chk" style="left:283px;top:956px;width:24px;height:24px;background-color:#6a6a6a;background-image:linear-gradient(45deg,#9a9a9a 25%,transparent 25%,transparent 75%,#9a9a9a 75%),linear-gradient(45deg,#9a9a9a 25%,transparent 25%,transparent 75%,#9a9a9a 75%);background-size:8px 8px;background-position:0 0,4px 4px"></div>
<div class="a" style="left:251px;top:960px;width:13px;height:9px;background:#555;border-radius:2px"></div>
<div class="a chk" style="left:283px;top:981px;width:24px;height:24px;background-color:#6a6a6a;background-image:linear-gradient(45deg,#9a9a9a 25%,transparent 25%,transparent 75%,#9a9a9a 75%),linear-gradient(45deg,#9a9a9a 25%,transparent 25%,transparent 75%,#9a9a9a 75%);background-size:8px 8px;background-position:0 0,4px 4px"></div>
<div class="a" style="left:251px;top:985px;width:13px;height:9px;background:#555;border-radius:2px"></div>
<div class="a chk" style="left:283px;top:1006px;width:24px;height:24px;background-color:#6a6a6a;background-image:linear-gradient(45deg,#9a9a9a 25%,transparent 25%,transparent 75%,#9a9a9a 75%),linear-gradient(45deg,#9a9a9a 25%,transparent 25%,transparent 75%,#9a9a9a 75%);background-size:8px 8px;background-position:0 0,4px 4px"></div>
<div class="a" style="left:251px;top:1010px;width:13px;height:9px;background:#555;border-radius:2px"></div>
<div class="a chk" style="left:283px;top:1031px;width:24px;height:24px;background-color:#6a6a6a;background-image:linear-gradient(45deg,#9a9a9a 25%,transparent 25%,transparent 75%,#9a9a9a 75%),linear-gradient(45deg,#9a9a9a 25%,transparent 25%,transparent 75%,#9a9a9a 75%);background-size:8px 8px;background-position:0 0,4px 4px"></div>
<div class="a" style="left:251px;top:1035px;width:13px;height:9px;background:#555;border-radius:2px"></div>
<div class="a chk" style="left:283px;top:1056px;width:24px;height:24px;background-color:#6a6a6a;background-image:linear-gradient(45deg,#9a9a9a 25%,transparent 25%,transparent 75%,#9a9a9a 75%),linear-gradient(45deg,#9a9a9a 25%,transparent 25%,transparent 75%,#9a9a9a 75%);background-size:8px 8px;background-position:0 0,4px 4px"></div>
<div class="a" style="left:251px;top:1060px;width:13px;height:9px;background:#555;border-radius:2px"></div>
<div class="a" style="left:285px;top:986px;width:10px;height:12px;background:repeating-linear-gradient(#111 0 2px,transparent 2px 4px)"></div>
<div class="a" style="left:285px;top:1018px;width:10px;height:4px;background:#3a8ac0"></div>
<div class="a" style="left:285px;top:1036px;width:10px;height:12px;background:#1f1f1f;border-radius:2px"></div>
<div class="a" style="left:251px;top:1083px;width:14px;height:11px;background:#eee;border:1px solid #222"></div>
<svg class="a" style="left:252px;top:1084px" width="12" height="9"><path d="M1 4.5 Q6 0 11 4.5 Q6 9 1 4.5Z" fill="none" stroke="#111" stroke-width="1"/><circle cx="6" cy="4.5" r="2" fill="#111"/></svg>
<svg class="a" style="left:267px;top:1082px" width="14" height="14"><path d="M2 11 L10 3 L12 5 L4 12 Z" fill="#222"/><path d="M1 12 L3 10 L4 12 Z" fill="#ddd"/></svg>
<div class="a" style="left:283px;top:1081px;width:24px;height:24px;background:#00b9f8;border:1.5px solid #f5a21c"></div>
<div class="a" style="left:0px;top:1106px;width:21px;height:24px;background:repeating-linear-gradient(-45deg,#8a8a8a 0 3px,#5a5a5a 3px 6px)"></div>
<div class="a" style="left:-1px;top:1108px;width:20px;height:20px;border-radius:50%;background:radial-gradient(circle at 45% 45%,#9ee8e0 0,#4aa6b8 45%,#5575c0 85%)"></div>
<svg class="a" style="left:22px;top:1107px" width="15" height="14"><path d="M2.5 3 Q6 6 12 12 M12.5 2 Q7 6 2 12" stroke="#e25a58" stroke-width="2.8" fill="none" stroke-linecap="round"/></svg>
<div class="a" style="left:40px;top:1106px;width:117px;height:24px;background:#6a6a6a"></div>
<div class="t" style="left:42px;top:1112px;color:#dcdcdc">Classic_Glowball_oran</div>
<div class="a" style="left:242px;top:1114px;width:0;height:0;border-top:4px solid transparent;border-bottom:4px solid transparent;border-left:5px solid #cfcfcf"></div>
<div class="a" style="left:0;top:1131px;width:21px;height:24px;background:repeating-linear-gradient(-45deg,#8a8a8a 0 3px,#5a5a5a 3px 6px)"></div>
<div class="a" style="left:1px;top:1133px;width:17px;height:20px;background:#1a2530;border-radius:2px"></div>
<div class="a" style="left:3px;top:1136px;width:4px;height:4px;background:#00aaff;border-radius:50%"></div>
<svg class="a" style="left:22px;top:1132px" width="15" height="14"><path d="M2.5 3 Q6 6 12 12 M12.5 2 Q7 6 2 12" stroke="#e25a58" stroke-width="2.8" fill="none" stroke-linecap="round"/></svg>
<div class="a" style="left:40px;top:1131px;width:33px;height:24px;background:#6a6a6a"></div>
<div class="t" style="left:42px;top:1137px;color:#dcdcdc">Mat.2</div>
<div class="a" style="left:242px;top:1139px;width:0;height:0;border-top:4px solid transparent;border-bottom:4px solid transparent;border-left:5px solid #cfcfcf"></div>
<div class="a" style="left:0;top:1156px;width:21px;height:24px;background:repeating-linear-gradient(-45deg,#8a8a8a 0 3px,#5a5a5a 3px 6px)"></div>
<div class="a" style="left:0px;top:1158px;width:18px;height:20px;border:1.5px dashed #2a7aff"></div>
<svg class="a" style="left:22px;top:1157px" width="15" height="14"><path d="M2.5 3 Q6 6 12 12 M12.5 2 Q7 6 2 12" stroke="#e25a58" stroke-width="2.8" fill="none" stroke-linecap="round"/></svg>
<div class="a" style="left:40px;top:1156px;width:41px;height:24px;background:#6a6a6a"></div>
<div class="t" style="left:42px;top:1162px;color:#dcdcdc">UI_021</div>
<div class="a" style="left:242px;top:1164px;width:0;height:0;border-top:4px solid transparent;border-bottom:4px solid transparent;border-left:5px solid #cfcfcf"></div>
<div class="a" style="left:0px;top:1181px;width:21px;height:24px;background:repeating-linear-gradient(-45deg,#8a8a8a 0 3px,#5a5a5a 3px 6px)"></div>
<div class="a" style="left:-1px;top:1183px;width:20px;height:20px;border-radius:50%;background:radial-gradient(circle at 40% 35%,#666 0,#1a1a1a 35%,#000 80%)"></div>
<svg class="a" style="left:22px;top:1182px" width="15" height="14"><path d="M2.5 3 Q6 6 12 12 M12.5 2 Q7 6 2 12" stroke="#e25a58" stroke-width="2.8" fill="none" stroke-linecap="round"/></svg>
<div class="a" style="left:40px;top:1181px;width:24px;height:24px;background:#6a6a6a"></div>
<div class="t" style="left:42px;top:1187px;color:#dcdcdc">Mat</div>
<div class="a" style="left:242px;top:1189px;width:0;height:0;border-top:4px solid transparent;border-bottom:4px solid transparent;border-left:5px solid #cfcfcf"></div>
<div class="a" style="left:0px;top:1206px;width:21px;height:24px;background:repeating-linear-gradient(-45deg,#8a8a8a 0 3px,#5a5a5a 3px 6px)"></div>
<div class="a" style="left:-1px;top:1208px;width:20px;height:20px;border-radius:50%;background:radial-gradient(circle at 40% 35%,#fff 0,#f6f6f6 60%,#ddd 85%)"></div>
<svg class="a" style="left:22px;top:1207px" width="15" height="14"><path d="M2.5 3 Q6 6 12 12 M12.5 2 Q7 6 2 12" stroke="#e25a58" stroke-width="2.8" fill="none" stroke-linecap="round"/></svg>
<div class="a" style="left:40px;top:1206px;width:82px;height:24px;background:#6a6a6a"></div>
<div class="t" style="left:42px;top:1212px;color:#dcdcdc">Softbox Texture</div>
<div class="a" style="left:242px;top:1214px;width:0;height:0;border-top:4px solid transparent;border-bottom:4px solid transparent;border-left:5px solid #cfcfcf"></div>
<div class="a" style="left:40px;top:1231px;width:117px;height:3px;background:#6a6a6a"></div>
<div class="a" style="left:692px;top:900px;width:9px;height:332px;background:#2f2f2f;border-radius:5px"></div>
<div class="a" style="left:693px;top:911px;width:7px;height:120px;background:#6c6c6c;border-radius:4px"></div>
<div class="a" style="left:694px;top:902px;width:0;height:0;border-left:3px solid transparent;border-right:3px solid transparent;border-bottom:6px solid #bbb"></div>
<div class="a" style="left:694px;top:1222px;width:0;height:0;border-left:3px solid transparent;border-right:3px solid transparent;border-top:6px solid #bbb"></div>
<div class="a" style="left:705px;top:853px;width:1px;height:382px;background:#5d5d5d"></div>
<div class="a" style="left:706px;top:853px;width:1px;height:382px;background:#3a3a3a"></div>
<div class="a" style="left:0px;top:1234px;width:1460px;height:1px;background:#2e2e2e"></div>
<div class="a" style="left:0px;top:1238px;width:2129px;height:1px;background:#5d5d5d"></div>
<svg class="a" style="left:0px;top:1242px" width="12" height="12" shape-rendering="crispEdges"><rect width="12" height="12" fill="url(#grippat)"/></svg>
<div class="a" style="left:709px;top:853px;width:747px;height:381px;background:#484848;border-left:1px solid #5d5d5d;border-right:1px solid #5d5d5d"></div>
<div class="a" style="left:709px;top:832px;width:58px;height:21px;background:#5c5c5c;border-radius:4px 4px 0 0"></div>
<div class="t" style="left:715px;top:837px;color:#f8a21c">Attributes</div>
<div class="a" style="left:767px;top:853px;width:688px;height:1px;background:#5d5d5d"></div>
<svg class="a" style="left:715px;top:858px" width="12" height="12" shape-rendering="crispEdges"><rect width="12" height="12" fill="url(#grippat)"/></svg>
<div class="t" style="left:736px;top:859px;color:#d2d2d2">Mode</div>
<div class="t" style="left:779px;top:859px;color:#d2d2d2">Edit</div>
<div class="t" style="left:811px;top:859px;color:#d2d2d2">User Data</div>
<div class="a" style="left:710px;top:876px;width:745px;height:1px;background:#5d5d5d"></div>
<svg class="a" style="left:1300px;top:854px" width="155" height="22">
<path d="M7 10 L23 3 L18 10 L23 16 Z" fill="#151515"/>
<path d="M26 13 L40 7" stroke="#555" stroke-width="3"/>
<path d="M59 18 L52 18 L59 4 L66 18 Z" fill="#151515"/>
<circle cx="84" cy="8" r="4" fill="none" stroke="#151515" stroke-width="1.5"/><path d="M87 11 L92 17" stroke="#151515" stroke-width="2"/>
<rect x="104" y="11" width="10" height="8" fill="none" stroke="#151515" stroke-width="1.5"/><path d="M106 11 V7 A3.5 3.5 0 0 1 113 7" fill="none" stroke="#151515" stroke-width="1.5"/>
<circle cx="127" cy="11" r="6.5" fill="none" stroke="#151515" stroke-width="1.5"/><circle cx="127" cy="11" r="3" fill="none" stroke="#151515" stroke-width="1.5"/>
<rect x="139" y="5" width="11" height="13" fill="none" stroke="#151515" stroke-width="1.5"/><path d="M139 5 H150" stroke="#151515" stroke-width="3"/><path d="M144.5 8 V16 M140.5 12 H148.5" stroke="#151515" stroke-width="2"/>
</svg>
<div class="a" style="left:713px;top:879px;width:21px;height:24px;background:repeating-linear-gradient(-45deg,#8a8a8a 0 3px,#5a5a5a 3px 6px)"></div>
<div class="a" style="left:712px;top:881px;width:20px;height:20px;border-radius:50%;background:radial-gradient(circle at 40% 35%,#6a6a6a 0,#2a2f35 40%,#06080a 85%)"></div>
<div class="a" style="left:722px;top:881px;width:10px;height:20px;border-radius:0 10px 10px 0;background:linear-gradient(90deg,rgba(120,120,120,0.55),rgba(60,60,60,0.5))"></div>
<div class="a" style="left:721px;top:893px;width:1.5px;height:5px;background:#1a9ad8"></div>
<div class="t" style="left:738px;top:885px;color:#d4d4d4">Texture Tag [Texture]</div>
<div class="a" style="left:713px;top:904px;width:204px;height:18px;background:#6a6a6a;border:1px solid #333;border-radius:4px"></div>
<div class="a" style="left:781px;top:905px;width:67px;height:16px;background:#8aa5cd"></div>
<div class="a" style="left:780px;top:905px;width:1px;height:16px;background:#333"></div>
<div class="a" style="left:848px;top:905px;width:1px;height:16px;background:#333"></div>
<div class="t" style="left:731px;top:907px;color:#dcdcdc">Basic</div>
<div class="t" style="left:806px;top:907px;color:#111">Tag</div>
<div class="t" style="left:852px;top:907px;color:#dcdcdc">Coordinates</div>
<div class="a" style="left:712px;top:927px;width:738px;height:16px;background:#353535"></div>
<div class="t" style="left:714px;top:929px;color:#d0d0d0;font-weight:bold">Tag Properties</div>
<div class="a" style="left:714px;top:950px;width:14px;height:14px;border-radius:50%;background:#5a5a5a"></div>
<div class="a" style="left:716px;top:952px;width:10px;height:10px;border-radius:50%;background:#7c7c7c;border:1px solid #111"></div>
<div class="a" style="left:735px;top:953px;width:0;height:0;border-top:3.5px solid transparent;border-bottom:3.5px solid transparent;border-left:4px solid #222"></div>
<div class="t" style="left:743px;top:951px;color:#d4d4d4">Material</div>
<div class="a" style="left:826px;top:960px;width:2px;height:1px;background:#b4b4b4"></div>
<div class="a" style="left:820px;top:960px;width:2px;height:1px;background:#b4b4b4"></div>
<div class="a" style="left:814px;top:960px;width:2px;height:1px;background:#b4b4b4"></div>
<div class="a" style="left:808px;top:960px;width:2px;height:1px;background:#b4b4b4"></div>
<div class="a" style="left:802px;top:960px;width:2px;height:1px;background:#b4b4b4"></div>
<div class="a" style="left:796px;top:960px;width:2px;height:1px;background:#b4b4b4"></div>
<div class="a" style="left:790px;top:960px;width:2px;height:1px;background:#b4b4b4"></div>
<div class="a" style="left:784px;top:960px;width:2px;height:1px;background:#b4b4b4"></div>
<div class="a" style="left:833px;top:948px;width:566px;height:18px;background:#333;border-radius:3px 0 0 3px"></div>
<div class="t" style="left:840px;top:951px;color:#d8d8d8">Mat</div>
<div class="a" style="left:1400px;top:948px;width:17px;height:17px;background:repeating-linear-gradient(-45deg,#8a8a8a 0 3px,#5a5a5a 3px 6px)"></div>
<div class="a" style="left:1401px;top:949px;width:15px;height:15px;border-radius:50%;background:radial-gradient(circle at 40% 35%,#6a6a6a 0,#2a2f35 40%,#06080a 85%)"></div>
<div class="a" style="left:1420px;top:948px;width:11px;height:18px;background:#6a6a6a;border-radius:3px"></div>
<div class="a" style="left:1423px;top:953px;width:0;height:0;border-top:4px solid transparent;border-bottom:4px solid transparent;border-left:5px solid #cfcfcf"></div>
<svg class="a" style="left:1432px;top:948px" width="18" height="18"><circle cx="9" cy="9" r="8" fill="#d8d8d8" stroke="#222" stroke-width="1"/><path d="M6 5 L14 9 L10.5 10 L13 13.5 L11.5 14.5 L9 11 L7 13.5 Z" fill="#111"/></svg>
<div class="a" style="left:714px;top:971px;width:14px;height:14px;border-radius:50%;background:#5a5a5a"></div>
<div class="a" style="left:716px;top:973px;width:10px;height:10px;border-radius:50%;background:#7c7c7c;border:1px solid #111"></div>
<div class="t" style="left:732px;top:972px;color:#d4d4d4">Selection</div>
<div class="a" style="left:826px;top:981px;width:2px;height:1px;background:#b4b4b4"></div>
<div class="a" style="left:820px;top:981px;width:2px;height:1px;background:#b4b4b4"></div>
<div class="a" style="left:814px;top:981px;width:2px;height:1px;background:#b4b4b4"></div>
<div class="a" style="left:808px;top:981px;width:2px;height:1px;background:#b4b4b4"></div>
<div class="a" style="left:802px;top:981px;width:2px;height:1px;background:#b4b4b4"></div>
<div class="a" style="left:796px;top:981px;width:2px;height:1px;background:#b4b4b4"></div>
<div class="a" style="left:790px;top:981px;width:2px;height:1px;background:#b4b4b4"></div>
<div class="a" style="left:784px;top:981px;width:2px;height:1px;background:#b4b4b4"></div>
<div class="a" style="left:833px;top:969px;width:615px;height:18px;background:#333;border-radius:3px"></div>
<div class="a" style="left:714px;top:990px;width:14px;height:14px;border-radius:50%;background:#5a5a5a"></div>
<div class="a" style="left:716px;top:992px;width:10px;height:10px;border-radius:50%;background:#7c7c7c;border:1px solid #111"></div>
<div class="t" style="left:732px;top:991px;color:#d4d4d4">Projection</div>
<div class="a" style="left:826px;top:1001px;width:2px;height:1px;background:#b4b4b4"></div>
<div class="a" style="left:820px;top:1001px;width:2px;height:1px;background:#b4b4b4"></div>
<div class="a" style="left:814px;top:1001px;width:2px;height:1px;background:#b4b4b4"></div>
<div class="a" style="left:808px;top:1001px;width:2px;height:1px;background:#b4b4b4"></div>
<div class="a" style="left:802px;top:1001px;width:2px;height:1px;background:#b4b4b4"></div>
<div class="a" style="left:796px;top:1001px;width:2px;height:1px;background:#b4b4b4"></div>
<div class="a" style="left:790px;top:1001px;width:2px;height:1px;background:#b4b4b4"></div>
<div class="a" style="left:784px;top:1001px;width:2px;height:1px;background:#b4b4b4"></div>
<div class="a" style="left:833px;top:989px;width:616px;height:17px;background:linear-gradient(#777,#636363);border-radius:3px;border-bottom:1px solid #2a2a2a"></div>
<div class="t" style="left:840px;top:991px;color:#e8e8e8">UVW Mapping</div>
<div class="a" style="left:1436px;top:996px;width:0;height:0;border-left:4.5px solid transparent;border-right:4.5px solid transparent;border-top:5px solid #e8e8e8"></div>
<div class="a" style="left:714px;top:1009px;width:14px;height:14px;border-radius:50%;background:#5a5a5a"></div>
<div class="a" style="left:716px;top:1011px;width:10px;height:10px;border-radius:50%;background:#7c7c7c;border:1px solid #111"></div>
<div class="t" style="left:732px;top:1010px;color:#d4d4d4">Side</div>
<div class="a" style="left:826px;top:1020px;width:2px;height:1px;background:#b4b4b4"></div>
<div class="a" style="left:820px;top:1020px;width:2px;height:1px;background:#b4b4b4"></div>
<div class="a" style="left:814px;top:1020px;width:2px;height:1px;background:#b4b4b4"></div>
<div class="a" style="left:808px;top:1020px;width:2px;height:1px;background:#b4b4b4"></div>
<div class="a" style="left:802px;top:1020px;width:2px;height:1px;background:#b4b4b4"></div>
<div class="a" style="left:796px;top:1020px;width:2px;height:1px;background:#b4b4b4"></div>
<div class="a" style="left:790px;top:1020px;width:2px;height:1px;background:#b4b4b4"></div>
<div class="a" style="left:784px;top:1020px;width:2px;height:1px;background:#b4b4b4"></div>
<div class="a" style="left:778px;top:1020px;width:2px;height:1px;background:#b4b4b4"></div>
<div class="a" style="left:772px;top:1020px;width:2px;height:1px;background:#b4b4b4"></div>
<div class="a" style="left:766px;top:1020px;width:2px;height:1px;background:#b4b4b4"></div>
<div class="a" style="left:760px;top:1020px;width:2px;height:1px;background:#b4b4b4"></div>
<div class="a" style="left:833px;top:1008px;width:616px;height:17px;background:linear-gradient(#777,#636363);border-radius:3px;border-bottom:1px solid #2a2a2a"></div>
<div class="t" style="left:840px;top:1010px;color:#e8e8e8">Front</div>
<div class="a" style="left:1436px;top:1015px;width:0;height:0;border-left:4.5px solid transparent;border-right:4.5px solid transparent;border-top:5px solid #e8e8e8"></div>
<div class="a" style="left:712px;top:1031px;width:738px;height:1px;background:#5d5d5d"></div>
<div class="a" style="left:714px;top:1036px;width:14px;height:14px;border-radius:50%;background:#5a5a5a"></div>
<div class="a" style="left:716px;top:1038px;width:10px;height:10px;border-radius:50%;background:#7c7c7c;border:1px solid #111"></div>
<div class="t" style="left:732px;top:1037px;color:#d4d4d4">Mix Textures</div>
<div class="a" style="left:826px;top:1046px;width:2px;height:1px;background:#b4b4b4"></div>
<div class="a" style="left:820px;top:1046px;width:2px;height:1px;background:#b4b4b4"></div>
<div class="a" style="left:814px;top:1046px;width:2px;height:1px;background:#b4b4b4"></div>
<div class="a" style="left:808px;top:1046px;width:2px;height:1px;background:#b4b4b4"></div>
<div class="a" style="left:802px;top:1046px;width:2px;height:1px;background:#b4b4b4"></div>
<div class="a" style="left:796px;top:1046px;width:2px;height:1px;background:#b4b4b4"></div>
<div class="a" style="left:833px;top:1036px;width:12px;height:12px;border-radius:3px;background:linear-gradient(#727272,#555);border:1px solid #333"></div>
<div class="a" style="left:714px;top:1055px;width:14px;height:14px;border-radius:50%;background:#5a5a5a"></div>
<div class="a" style="left:716px;top:1057px;width:10px;height:10px;border-radius:50%;background:#7c7c7c;border:1px solid #111"></div>
<div class="t" style="left:732px;top:1056px;color:#d4d4d4">Tile</div>
<div class="a" style="left:826px;top:1065px;width:2px;height:1px;background:#b4b4b4"></div>
<div class="a" style="left:820px;top:1065px;width:2px;height:1px;background:#b4b4b4"></div>
<div class="a" style="left:814px;top:1065px;width:2px;height:1px;background:#b4b4b4"></div>
<div class="a" style="left:808px;top:1065px;width:2px;height:1px;background:#b4b4b4"></div>
<div class="a" style="left:802px;top:1065px;width:2px;height:1px;background:#b4b4b4"></div>
<div class="a" style="left:796px;top:1065px;width:2px;height:1px;background:#b4b4b4"></div>
<div class="a" style="left:790px;top:1065px;width:2px;height:1px;background:#b4b4b4"></div>
<div class="a" style="left:784px;top:1065px;width:2px;height:1px;background:#b4b4b4"></div>
<div class="a" style="left:778px;top:1065px;width:2px;height:1px;background:#b4b4b4"></div>
<div class="a" style="left:772px;top:1065px;width:2px;height:1px;background:#b4b4b4"></div>
<div class="a" style="left:766px;top:1065px;width:2px;height:1px;background:#b4b4b4"></div>
<div class="a" style="left:760px;top:1065px;width:2px;height:1px;background:#b4b4b4"></div>
<div class="a" style="left:754px;top:1065px;width:2px;height:1px;background:#b4b4b4"></div>
<div class="a" style="left:833px;top:1055px;width:12px;height:12px;border-radius:3px;background:linear-gradient(#727272,#555);border:1px solid #333"></div>
<div class="a" style="left:714px;top:1074px;width:14px;height:14px;border-radius:50%;background:#5a5a5a"></div>
<div class="a" style="left:716px;top:1076px;width:10px;height:10px;border-radius:50%;background:#7c7c7c;border:1px solid #111"></div>
<div class="t" style="left:732px;top:1075px;color:#d4d4d4">Seamless</div>
<div class="a" style="left:826px;top:1084px;width:2px;height:1px;background:#b4b4b4"></div>
<div class="a" style="left:820px;top:1084px;width:2px;height:1px;background:#b4b4b4"></div>
<div class="a" style="left:814px;top:1084px;width:2px;height:1px;background:#b4b4b4"></div>
<div class="a" style="left:808px;top:1084px;width:2px;height:1px;background:#b4b4b4"></div>
<div class="a" style="left:802px;top:1084px;width:2px;height:1px;background:#b4b4b4"></div>
<div class="a" style="left:796px;top:1084px;width:2px;height:1px;background:#b4b4b4"></div>
<div class="a" style="left:790px;top:1084px;width:2px;height:1px;background:#b4b4b4"></div>
<div class="a" style="left:784px;top:1084px;width:2px;height:1px;background:#b4b4b4"></div>
<div class="a" style="left:833px;top:1074px;width:12px;height:12px;border-radius:3px;background:linear-gradient(#727272,#555);border:1px solid #333"></div>
<div class="a" style="left:714px;top:1093px;width:14px;height:14px;border-radius:50%;background:#5a5a5a"></div>
<div class="a" style="left:716px;top:1095px;width:10px;height:10px;border-radius:50%;background:#7c7c7c;border:1px solid #111"></div>
<div class="t" style="left:732px;top:1094px;color:#d4d4d4">Use UVW for Bump</div>
<div class="a" style="left:833px;top:1093px;width:12px;height:12px;border-radius:3px;background:linear-gradient(#727272,#555);border:1px solid #333"></div>
<svg class="a" style="left:833px;top:1093px" width="13" height="13"><path d="M3 6 L5.5 10 L11 1" fill="none" stroke="#eee" stroke-width="1.6"/></svg>
<div class="a" style="left:712px;top:1113px;width:738px;height:1px;background:#5d5d5d"></div>
<div class="a" style="left:714px;top:1120px;width:14px;height:14px;border-radius:50%;background:#5a5a5a"></div>
<div class="a" style="left:716px;top:1122px;width:10px;height:10px;border-radius:50%;background:#7c7c7c;border:1px solid #111"></div>
<div class="a" style="left:881px;top:1120px;width:14px;height:14px;border-radius:50%;background:#5a5a5a"></div>
<div class="a" style="left:883px;top:1122px;width:10px;height:10px;border-radius:50%;background:#7c7c7c;border:1px solid #111"></div>
<div class="t" style="left:732px;top:1121px;color:#d4d4d4">Offset U</div>
<div class="t" style="left:899px;top:1121px;color:#d4d4d4">Offset V</div>
<div class="a" style="left:797px;top:1130px;width:2px;height:1px;background:#b4b4b4"></div>
<div class="a" style="left:791px;top:1130px;width:2px;height:1px;background:#b4b4b4"></div>
<div class="a" style="left:785px;top:1130px;width:2px;height:1px;background:#b4b4b4"></div>
<div class="a" style="left:779px;top:1130px;width:2px;height:1px;background:#b4b4b4"></div>
<div class="a" style="left:964px;top:1130px;width:2px;height:1px;background:#b4b4b4"></div>
<div class="a" style="left:958px;top:1130px;width:2px;height:1px;background:#b4b4b4"></div>
<div class="a" style="left:952px;top:1130px;width:2px;height:1px;background:#b4b4b4"></div>
<div class="a" style="left:946px;top:1130px;width:2px;height:1px;background:#b4b4b4"></div>
<div class="a" style="left:804px;top:1119px;width:73px;height:17px;background:#333;border-radius:2px;border-bottom:1px solid #5a5a5a"></div>
<div class="t" style="left:809px;top:1122px;color:#d8d8d8">0 %</div>
<div class="t" style="left:869px;top:1122px;font-size:7px;line-height:6px;color:#bbb">&#9650;<br>&#9660;</div>
<div class="a" style="left:970px;top:1119px;width:73px;height:17px;background:#333;border-radius:2px;border-bottom:1px solid #5a5a5a"></div>
<div class="t" style="left:975px;top:1122px;color:#d8d8d8">0 %</div>
<div class="t" style="left:1035px;top:1122px;font-size:7px;line-height:6px;color:#bbb">&#9650;<br>&#9660;</div>
<div class="a" style="left:714px;top:1141px;width:14px;height:14px;border-radius:50%;background:#5a5a5a"></div>
<div class="a" style="left:716px;top:1143px;width:10px;height:10px;border-radius:50%;background:#7c7c7c;border:1px solid #111"></div>
<div class="a" style="left:881px;top:1141px;width:14px;height:14px;border-radius:50%;background:#5a5a5a"></div>
<div class="a" style="left:883px;top:1143px;width:10px;height:10px;border-radius:50%;background:#7c7c7c;border:1px solid #111"></div>
<div class="t" style="left:732px;top:1142px;color:#d4d4d4">Length U</div>
<div class="t" style="left:899px;top:1142px;color:#d4d4d4">Length V</div>
<div class="a" style="left:797px;top:1151px;width:2px;height:1px;background:#b4b4b4"></div>
<div class="a" style="left:791px;top:1151px;width:2px;height:1px;background:#b4b4b4"></div>
<div class="a" style="left:785px;top:1151px;width:2px;height:1px;background:#b4b4b4"></div>
<div class="a" style="left:779px;top:1151px;width:2px;height:1px;background:#b4b4b4"></div>
<div class="a" style="left:964px;top:1151px;width:2px;height:1px;background:#b4b4b4"></div>
<div class="a" style="left:958px;top:1151px;width:2px;height:1px;background:#b4b4b4"></div>
<div class="a" style="left:952px;top:1151px;width:2px;height:1px;background:#b4b4b4"></div>
<div class="a" style="left:946px;top:1151px;width:2px;height:1px;background:#b4b4b4"></div>
<div class="a" style="left:804px;top:1140px;width:73px;height:17px;background:#333;border-radius:2px;border-bottom:1px solid #5a5a5a"></div>
<div class="t" style="left:809px;top:1143px;color:#d8d8d8">100 %</div>
<div class="t" style="left:869px;top:1143px;font-size:7px;line-height:6px;color:#bbb">&#9650;<br>&#9660;</div>
<div class="a" style="left:970px;top:1140px;width:73px;height:17px;background:#333;border-radius:2px;border-bottom:1px solid #5a5a5a"></div>
<div class="t" style="left:975px;top:1143px;color:#d8d8d8">100 %</div>
<div class="t" style="left:1035px;top:1143px;font-size:7px;line-height:6px;color:#bbb">&#9650;<br>&#9660;</div>
<div class="a" style="left:714px;top:1162px;width:14px;height:14px;border-radius:50%;background:#5a5a5a"></div>
<div class="a" style="left:716px;top:1164px;width:10px;height:10px;border-radius:50%;background:#7c7c7c;border:1px solid #111"></div>
<div class="a" style="left:881px;top:1162px;width:14px;height:14px;border-radius:50%;background:#5a5a5a"></div>
<div class="a" style="left:883px;top:1164px;width:10px;height:10px;border-radius:50%;background:#7c7c7c;border:1px solid #111"></div>
<div class="t" style="left:732px;top:1163px;color:#d4d4d4">Tiles U</div>
<div class="t" style="left:899px;top:1163px;color:#d4d4d4">Tiles V</div>
<div class="a" style="left:797px;top:1172px;width:2px;height:1px;background:#b4b4b4"></div>
<div class="a" style="left:791px;top:1172px;width:2px;height:1px;background:#b4b4b4"></div>
<div class="a" style="left:785px;top:1172px;width:2px;height:1px;background:#b4b4b4"></div>
<div class="a" style="left:779px;top:1172px;width:2px;height:1px;background:#b4b4b4"></div>
<div class="a" style="left:773px;top:1172px;width:2px;height:1px;background:#b4b4b4"></div>
<div class="a" style="left:964px;top:1172px;width:2px;height:1px;background:#b4b4b4"></div>
<div class="a" style="left:958px;top:1172px;width:2px;height:1px;background:#b4b4b4"></div>
<div class="a" style="left:952px;top:1172px;width:2px;height:1px;background:#b4b4b4"></div>
<div class="a" style="left:946px;top:1172px;width:2px;height:1px;background:#b4b4b4"></div>
<div class="a" style="left:940px;top:1172px;width:2px;height:1px;background:#b4b4b4"></div>
<div class="a" style="left:934px;top:1172px;width:2px;height:1px;background:#b4b4b4"></div>
<div class="a" style="left:804px;top:1161px;width:73px;height:17px;background:#333;border-radius:2px;border-bottom:1px solid #5a5a5a"></div>
<div class="t" style="left:809px;top:1164px;color:#d8d8d8">1</div>
<div class="t" style="left:869px;top:1164px;font-size:7px;line-height:6px;color:#bbb">&#9650;<br>&#9660;</div>
<div class="a" style="left:970px;top:1161px;width:73px;height:17px;background:#333;border-radius:2px;border-bottom:1px solid #5a5a5a"></div>
<div class="t" style="left:975px;top:1164px;color:#d8d8d8">1</div>
<div class="t" style="left:1035px;top:1164px;font-size:7px;line-height:6px;color:#bbb">&#9650;<br>&#9660;</div>
<div class="a" style="left:715px;top:1184px;width:11px;height:11px;border-radius:50%;border:1px solid #3a3a3a;border-left-color:#2a2a2a"></div>
<div class="a" style="left:882px;top:1184px;width:11px;height:11px;border-radius:50%;border:1px solid #3a3a3a;border-left-color:#2a2a2a"></div>
<div class="t" style="left:732px;top:1184px;color:#888">Repetitions U</div>
<div class="t" style="left:899px;top:1184px;color:#888">Repetitions V</div>
<div class="a" style="left:804px;top:1182px;width:73px;height:17px;background:#3a3a3a;border-radius:2px;border-bottom:1px solid #5a5a5a"></div>
<div class="t" style="left:809px;top:1185px;color:#777">0</div>
<div class="t" style="left:869px;top:1185px;font-size:7px;line-height:6px;color:#666">&#9650;<br>&#9660;</div>
<div class="a" style="left:970px;top:1182px;width:73px;height:17px;background:#3a3a3a;border-radius:2px;border-bottom:1px solid #5a5a5a"></div>
<div class="t" style="left:975px;top:1185px;color:#777">0</div>
<div class="t" style="left:1035px;top:1185px;font-size:7px;line-height:6px;color:#666">&#9650;<br>&#9660;</div>
<div class="a" style="left:1458px;top:853px;width:671px;height:381px;background:#484848;border-left:1px solid #5d5d5d"></div>
<div class="a" style="left:1460px;top:834px;width:70px;height:19px;background:#3d3d3d;border-radius:4px 4px 0 0"></div>
<div class="t" style="left:1465px;top:838px;color:#9a9a9a">UV Mapping</div>
<div class="a" style="left:1532px;top:832px;width:46px;height:21px;background:#5c5c5c;border-radius:4px 4px 0 0"></div>
<div class="t" style="left:1537px;top:837px;color:#f8a21c">Layers</div>
<div class="a" style="left:1579px;top:834px;width:51px;height:19px;background:#3d3d3d;border-radius:4px 4px 0 0"></div>
<div class="t" style="left:1584px;top:838px;color:#9a9a9a">Brushes</div>
<div class="a" style="left:1632px;top:834px;width:58px;height:19px;background:#3d3d3d;border-radius:4px 4px 0 0"></div>
<div class="t" style="left:1637px;top:838px;color:#9a9a9a">Swatches</div>
<div class="a" style="left:1690px;top:853px;width:439px;height:1px;background:#5d5d5d"></div>
<svg class="a" style="left:1465px;top:858px" width="12" height="12" shape-rendering="crispEdges"><rect width="12" height="12" fill="url(#grippat)"/></svg>
<div class="t" style="left:1486px;top:859px;color:#d2d2d2">View</div>
<div class="t" style="left:1524px;top:859px;color:#d2d2d2">Functions</div>
<div class="a" style="left:1459px;top:876px;width:670px;height:1px;background:#5d5d5d"></div>
<div class="a" style="left:1464px;top:885px;width:662px;height:18px;border:1px solid #3a3a3a;background:#474747"></div>
<div class="a" style="left:1465px;top:907px;width:52px;height:17px;background:#444;border:1px solid #3c3c3c;border-radius:2px"></div>
<div class="t" style="left:1470px;top:910px;color:#888">100 %</div>
<div class="t" style="left:1509px;top:910px;font-size:7px;line-height:6px;color:#777">&#9650;<br>&#9660;</div>
<div class="a" style="left:1519px;top:908px;width:518px;height:15px;background:#858585;border-radius:1px"></div>
<div class="a" style="left:1781px;top:917px;width:1px;height:4px;background:#555"></div>
<div class="a" style="left:2045px;top:907px;width:79px;height:17px;background:#535353;border-radius:3px;border:1px solid #3e3e3e"></div>
<div class="t" style="left:2052px;top:910px;color:#8a8a8a">Normal</div>
<div class="a" style="left:2110px;top:914px;width:0;height:0;border-left:4px solid transparent;border-right:4px solid transparent;border-top:4px solid #888"></div>
<div class="a" style="left:1464px;top:927px;width:662px;height:1px;background:#5d5d5d"></div>
<svg class="a" style="left:1460px;top:1216px" width="6" height="17" shape-rendering="crispEdges"><rect width="6" height="17" fill="url(#dotpat)"/></svg>
<div class="grp" style="left:1469px;top:1215px;width:79px;height:19px;border-radius:3px"></div>
<div class="grp" style="left:1559px;top:1215px;width:79px;height:19px;border-radius:3px"></div>
<div class="grp" style="left:1649px;top:1215px;width:59px;height:19px;border-radius:3px"></div>
<div class="grp" style="left:1719px;top:1215px;width:59px;height:19px;border-radius:3px"></div>
<div class="grp" style="left:1788px;top:1215px;width:20px;height:19px;border-radius:3px"></div>
<svg class="a" style="left:1455px;top:1202px" width="360" height="40"><rect x="33.5" y="13" width="1" height="18" fill="#4e4e4e"/><rect x="53.5" y="13" width="1" height="18" fill="#4e4e4e"/><rect x="73.5" y="13" width="1" height="18" fill="#4e4e4e"/><rect x="123.5" y="13" width="1" height="18" fill="#4e4e4e"/><rect x="143.5" y="13" width="1" height="18" fill="#4e4e4e"/><rect x="163.5" y="13" width="1" height="18" fill="#4e4e4e"/><rect x="213.5" y="13" width="1" height="18" fill="#4e4e4e"/><rect x="233.5" y="13" width="1" height="18" fill="#4e4e4e"/><rect x="283.5" y="13" width="1" height="18" fill="#4e4e4e"/><rect x="303.5" y="13" width="1" height="18" fill="#4e4e4e"/><rect x="20" y="18" width="9" height="9" fill="#e8652a" stroke="#222" stroke-width="0.5"/><rect x="17" y="13" width="9" height="9" fill="#eee" stroke="#333" stroke-width="0.5"/><path d="M28 22.5 V30.5 M24 26.5 H32" stroke="#fff" stroke-width="1.6"/><rect x="40" y="18" width="9" height="9" fill="#e8652a" stroke="#222" stroke-width="0.5"/><rect x="37" y="13" width="9" height="9" fill="#eee" stroke="#333" stroke-width="0.5"/><path d="M48 22.5 V30.5 M44 26.5 H52" stroke="#fff" stroke-width="1.6"/><rect x="60" y="18" width="9" height="9" fill="#e8652a" stroke="#222" stroke-width="0.5"/><rect x="57" y="13" width="9" height="9" fill="#e8652a" stroke="#222" stroke-width="0.5"/><rect x="80" y="18" width="9" height="9" fill="#e8652a" stroke="#222" stroke-width="0.5"/><rect x="77" y="13" width="9" height="9" fill="#eee" stroke="#333" stroke-width="0.5"/><path d="M84 26.5 H92" stroke="#fff" stroke-width="1.6"/><path d="M108 13 H118 V24 H108 Z M120 16 V27" stroke="#777" fill="none"/><path d="M128 13 H138 V24 H128 Z M131 16 L135 21" stroke="#777" fill="none"/><rect x="150" y="18" width="9" height="9" fill="#e8652a" stroke="#222" stroke-width="0.5"/><rect x="147" y="13" width="9" height="9" fill="#eee" stroke="#333" stroke-width="0.5"/><path d="M148.5 17 Q151.5 14 154.5 17 Q151.5 19 148.5 17Z" fill="#222"/><path d="M159 20 V29 M157 27 L159 29.5 L161 27" stroke="#fff" stroke-width="1.2" fill="none"/><rect x="170" y="18" width="9" height="9" fill="#e8652a" stroke="#222" stroke-width="0.5"/><rect x="167" y="13" width="9" height="9" fill="#eee" stroke="#333" stroke-width="0.5"/><path d="M179 20 V29 M177 27 L179 29.5 L181 27" stroke="#fff" stroke-width="1.2" fill="none"/><rect x="200" y="18" width="9" height="9" fill="#e8652a" stroke="#222" stroke-width="0.5"/><rect x="197" y="13" width="9" height="9" fill="#eee" stroke="#333" stroke-width="0.5"/><circle cx="201.5" cy="17.5" r="2.6" fill="#111"/><path d="M208 22.5 V30.5 M204 26.5 H212" stroke="#fff" stroke-width="1.6"/><path d="M218 13 H230 V25 H218 Z M221 22 L228 15" stroke="#777" fill="none"/><path d="M238 13 H250 V25 H238 Z M241 22 L248 15" stroke="#777" fill="none"/><path d="M268 20 L274 14 L280 20 L274 26 Z" stroke="#777" fill="none"/><path d="M288 16 L294 13 L300 16 V24 L294 27 L288 24 Z" stroke="#777" fill="none"/><rect x="310" y="18" width="9" height="9" fill="#e8652a" stroke="#222" stroke-width="0.5"/><rect x="307" y="13" width="9" height="9" fill="#eee" stroke="#333" stroke-width="0.5"/><path d="M318 22.5 V30.5 M314 26.5 H322" stroke="#fff" stroke-width="1.6"/><rect x="305" y="15" width="4" height="4" fill="#e8652a"/><rect x="337" y="13" width="14" height="14" fill="#eee" stroke="#e8652a" stroke-width="1.6"/><circle cx="343" cy="19" r="3" fill="#111"/><path d="M347 22 V30 M343 26 H351" stroke="#fff" stroke-width="1.6"/></svg>
</body></html>
